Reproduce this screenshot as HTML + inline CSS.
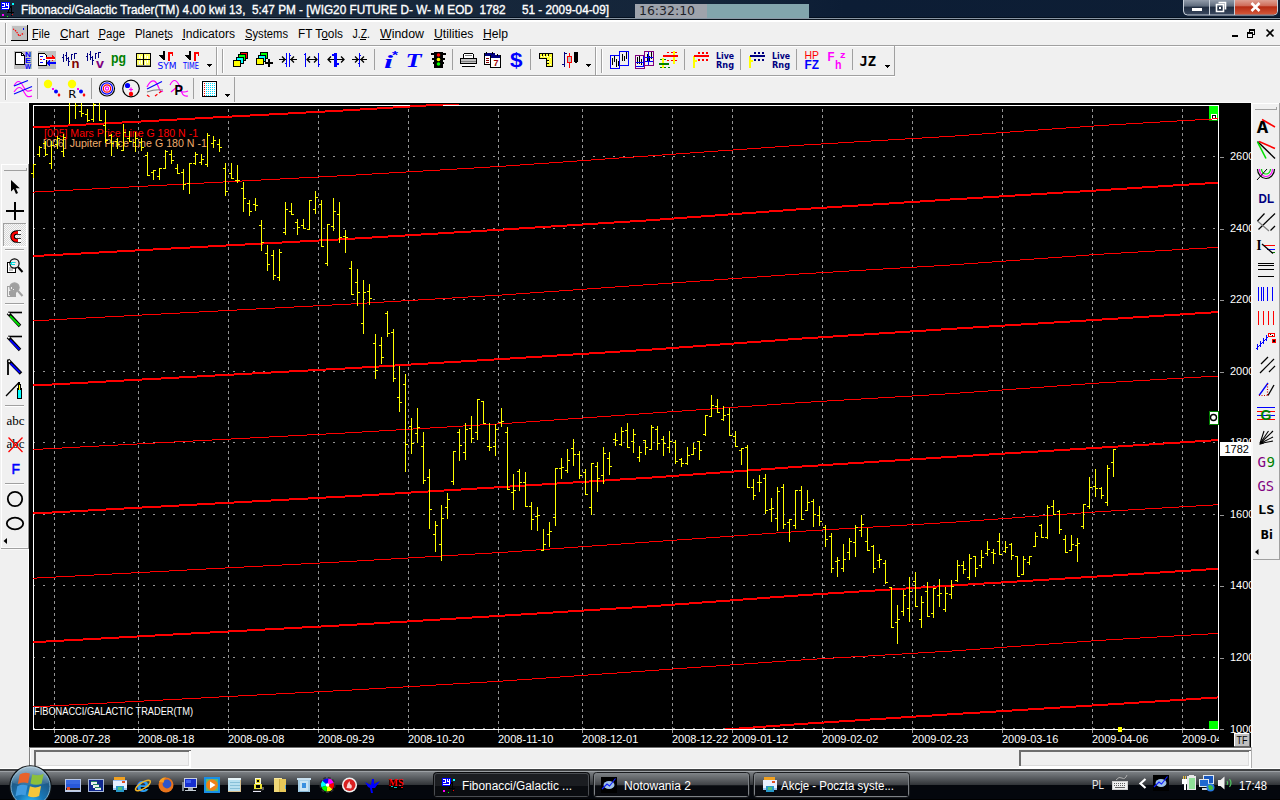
<!DOCTYPE html>
<html lang="pl">
<head>
<meta charset="utf-8">
<title>Fibonacci/Galactic Trader(TM) 4.00 - WIG20 FUTURE</title>
<style>
html,body{margin:0;padding:0;background:#f0f0f0;}
body{width:1280px;height:800px;overflow:hidden;position:relative;font-family:"Liberation Sans", sans-serif;}
svg{position:absolute;left:0;top:0;display:block;font-family:"Liberation Sans", sans-serif;}
text{white-space:pre;}
</style>
</head>
<body>
<svg width="1280" height="800" viewBox="0 0 1280 800">
<defs><linearGradient id="tb" x1="0" x2="1" y1="0" y2="0"><stop offset="0" stop-color="#1a2a3c"/><stop offset=".55" stop-color="#14253a"/><stop offset=".66" stop-color="#0c1d35"/><stop offset="1" stop-color="#0e1e34"/></linearGradient><linearGradient id="tk" x1="0" x2="0" y1="0" y2="1"><stop offset="0" stop-color="#7b7f83"/><stop offset="1" stop-color="#303337"/></linearGradient></defs>
<rect x="0" y="0" width="1280" height="17" fill="url(#tb)" />
<rect x="0" y="17" width="1280" height="1" fill="#04101f" />
<rect x="0" y="18" width="1280" height="1" fill="#8a97a5" />
<rect x="0" y="19" width="1280" height="1" fill="#0d1620" />
<rect x="0" y="20" width="1280" height="2" fill="#fff" />
<text x="21" y="13.8" font-size="12" fill="#fff" textLength="588" lengthAdjust="spacingAndGlyphs" stroke="#fff" stroke-width=".35">Fibonacci/Galactic Trader(TM) 4.00 kwi 13,  5:47 PM - [WIG20 FUTURE D- W- M EOD  1782     51 - 2009-04-09]</text>
<rect x="635" y="4" width="72" height="14" fill="#9ea3ac" />
<rect x="707" y="4" width="102" height="14" fill="#82a5ad" />
<text x="639" y="15" font-size="12" fill="#1e2228" textLength="56" lengthAdjust="spacingAndGlyphs" font-family='"DejaVu Sans", sans-serif' >16:32:10</text>
<text x="32" y="38" font-size="12" fill="#000" textLength="18" lengthAdjust="spacingAndGlyphs" >File</text>
<text x="60" y="38" font-size="12" fill="#000" textLength="29" lengthAdjust="spacingAndGlyphs" >Chart</text>
<text x="98.5" y="38" font-size="12" fill="#000" textLength="26.5" lengthAdjust="spacingAndGlyphs" >Page</text>
<text x="135" y="38" font-size="12" fill="#000" textLength="38" lengthAdjust="spacingAndGlyphs" >Planets</text>
<text x="182.5" y="38" font-size="12" fill="#000" textLength="52.5" lengthAdjust="spacingAndGlyphs" >Indicators</text>
<text x="245" y="38" font-size="12" fill="#000" textLength="43" lengthAdjust="spacingAndGlyphs" >Systems</text>
<text x="298" y="38" font-size="12" fill="#000" textLength="45" lengthAdjust="spacingAndGlyphs" >FT Tools</text>
<text x="352.5" y="38" font-size="12" fill="#000" textLength="17.5" lengthAdjust="spacingAndGlyphs" >J.Z.</text>
<text x="380" y="38" font-size="12" fill="#000" textLength="44" lengthAdjust="spacingAndGlyphs" >Window</text>
<text x="434" y="38" font-size="12" fill="#000" textLength="39.5" lengthAdjust="spacingAndGlyphs" >Utilities</text>
<text x="483" y="38" font-size="12" fill="#000" textLength="25" lengthAdjust="spacingAndGlyphs" >Help</text>
<g shape-rendering="crispEdges">
<rect x="0" y="45" width="1280" height="1" fill="#a0a0a0" />
<rect x="0" y="46" width="1280" height="1" fill="#fff" />
<rect x="0" y="75" width="895" height="1" fill="#a0a0a0" />
<rect x="0" y="76" width="895" height="1" fill="#fff" />
<rect x="894" y="46" width="1" height="30" fill="#a0a0a0" />
<rect x="234" y="77" width="1" height="26" fill="#a0a0a0" />
<rect x="0" y="102" width="1252" height="1" fill="#fafafa" />
<rect x="216" y="47" width="1" height="28" fill="#a0a0a0" />
<rect x="217" y="47" width="1" height="28" fill="#fff" />
<rect x="595" y="47" width="1" height="28" fill="#a0a0a0" />
<rect x="596" y="47" width="1" height="28" fill="#fff" />
<rect x="5" y="49" width="1" height="24" fill="#a0a0a0" />
<rect x="6" y="49" width="1" height="24" fill="#fff" />
<rect x="222" y="49" width="1" height="24" fill="#a0a0a0" />
<rect x="223" y="49" width="1" height="24" fill="#fff" />
<rect x="601" y="49" width="1" height="24" fill="#a0a0a0" />
<rect x="602" y="49" width="1" height="24" fill="#fff" />
<rect x="5" y="79" width="1" height="21" fill="#a0a0a0" />
<rect x="6" y="79" width="1" height="21" fill="#fff" />
<rect x="5" y="23" width="1" height="20" fill="#a0a0a0" />
<rect x="6" y="23" width="1" height="20" fill="#fff" />
<rect x="374" y="49" width="1" height="21" fill="#a0a0a0" />
<rect x="452" y="49" width="1" height="21" fill="#a0a0a0" />
<rect x="530" y="49" width="1" height="21" fill="#a0a0a0" />
<rect x="684" y="49" width="1" height="21" fill="#a0a0a0" />
<rect x="740" y="49" width="1" height="21" fill="#a0a0a0" />
<rect x="796" y="49" width="1" height="21" fill="#a0a0a0" />
<rect x="852" y="49" width="1" height="21" fill="#a0a0a0" />
<rect x="37" y="78" width="1" height="21" fill="#a0a0a0" />
<rect x="91" y="78" width="1" height="21" fill="#a0a0a0" />
<rect x="193" y="78" width="1" height="21" fill="#a0a0a0" />
<rect x="1" y="164" width="27" height="1" fill="#fff" />
<rect x="1" y="164" width="1" height="384" fill="#fff" />
<rect x="1" y="548" width="28" height="1" fill="#a0a0a0" />
<rect x="28" y="103" width="1" height="644" fill="#fff" />
<rect x="28" y="164" width="1" height="385" fill="#909090" />
<rect x="27" y="165" width="1" height="382" fill="#f8f8f8" />
<rect x="1" y="547" width="27" height="1" fill="#fafafa" />
<rect x="0" y="549" width="28" height="1" fill="#fafafa" />
<rect x="4" y="170" width="23" height="1" fill="#a0a0a0" />
<rect x="26" y="168" width="1" height="3" fill="#a0a0a0" />
<rect x="5" y="249" width="19" height="1" fill="#a0a0a0" />
<rect x="5" y="250" width="19" height="1" fill="#fff" />
<rect x="5" y="303" width="19" height="1" fill="#a0a0a0" />
<rect x="5" y="304" width="19" height="1" fill="#fff" />
<rect x="5" y="405" width="19" height="1" fill="#a0a0a0" />
<rect x="5" y="406" width="19" height="1" fill="#fff" />
<rect x="5" y="483" width="19" height="1" fill="#a0a0a0" />
<rect x="5" y="484" width="19" height="1" fill="#fff" />
<rect x="3" y="223" width="24" height="24" fill="#f8f8f8" />
<rect x="3" y="223" width="24" height="1" fill="#a0a0a0" />
<rect x="3" y="223" width="1" height="24" fill="#a0a0a0" />
<rect x="3" y="246" width="24" height="1" fill="#fff" />
<rect x="26" y="223" width="1" height="24" fill="#fff" />
<rect x="1251" y="103" width="2" height="644" fill="#fafafa" />
<rect x="1253" y="103" width="26" height="1" fill="#fff" />
<rect x="1279" y="103" width="1" height="457" fill="#a0a0a0" />
<rect x="1253" y="559" width="27" height="1" fill="#a0a0a0" />
<rect x="1255" y="109" width="22" height="1" fill="#a0a0a0" />
<rect x="1276" y="107" width="1" height="3" fill="#a0a0a0" />
<rect x="29" y="747" width="1222" height="1" fill="#707070" />
<rect x="29" y="748" width="1222" height="1" fill="#fff" />
<rect x="29" y="747" width="1" height="22" fill="#808080" />
<rect x="30" y="748" width="1" height="21" fill="#fff" />
<rect x="34" y="750" width="157" height="2" fill="#6e6e6e" />
<rect x="34" y="750" width="2" height="16" fill="#6e6e6e" />
<rect x="34" y="766" width="157" height="2" fill="#fff" />
<rect x="189" y="751" width="2" height="17" fill="#fff" />
<rect x="36" y="765" width="153" height="1" fill="#dcdcdc" />
<rect x="188" y="752" width="1" height="14" fill="#dcdcdc" />
<rect x="1019" y="750" width="232" height="2" fill="#6e6e6e" />
<rect x="1019" y="750" width="2" height="16" fill="#6e6e6e" />
<rect x="1019" y="766" width="232" height="2" fill="#fff" />
<rect x="1249" y="751" width="2" height="17" fill="#fff" />
<rect x="1021" y="765" width="228" height="1" fill="#dcdcdc" />
<rect x="1248" y="752" width="1" height="14" fill="#dcdcdc" />
<rect x="1251" y="747" width="1" height="22" fill="#b0b0b0" />
<rect x="0" y="768" width="1280" height="1" fill="#fff" />
<rect x="0" y="769" width="1280" height="2" fill="#404244" />
<rect x="0" y="771" width="1280" height="1" fill="#9ca0a4" />
<rect x="0" y="772" width="1280" height="13" fill="url(#tk)" />
<rect x="0" y="785" width="1280" height="15" fill="#04070d" />
<rect x="0" y="799" width="1280" height="1" fill="#000" />
</g>
<g shape-rendering="crispEdges" fill="#000">
<rect x="32" y="39" width="6" height="1"/>
<rect x="60" y="39" width="8" height="1"/>
<rect x="98" y="39" width="7" height="1"/>
<rect x="165" y="39" width="4" height="1"/>
<rect x="182" y="39" width="3" height="1"/>
<rect x="245" y="39" width="7" height="1"/>
<rect x="322" y="39" width="6" height="1"/>
<rect x="360" y="39" width="6" height="1"/>
<rect x="380" y="39" width="11" height="1"/>
<rect x="434" y="39" width="8" height="1"/>
<rect x="483" y="39" width="8" height="1"/>
</g>
<rect x="433.5" y="772.5" width="156" height="25" rx="3" fill="#1b1d21" stroke="#0a0b0d"/>
<rect x="434.5" y="773.5" width="154" height="23" rx="2.5" fill="none" stroke="#4a4d52"/>
<rect x="435" y="786" width="153" height="10" fill="#0a0c10"/>
<rect x="593.5" y="772.5" width="156" height="25" rx="3" fill="none" stroke="#1a1c1f"/>
<rect x="594.5" y="773.5" width="154" height="23" rx="2.5" fill="rgba(255,255,255,.08)" stroke="#7d8186"/>
<rect x="595" y="786" width="153" height="10" fill="#080a0f"/>
<rect x="753.5" y="772.5" width="156" height="25" rx="3" fill="none" stroke="#1a1c1f"/>
<rect x="754.5" y="773.5" width="154" height="23" rx="2.5" fill="rgba(255,255,255,.08)" stroke="#7d8186"/>
<rect x="755" y="786" width="153" height="10" fill="#080a0f"/>
<text x="462" y="790" font-size="12" fill="#fff" textLength="110" lengthAdjust="spacingAndGlyphs" >Fibonacci/Galactic ...</text>
<text x="624" y="790" font-size="12" fill="#fff" textLength="67" lengthAdjust="spacingAndGlyphs" >Notowania 2</text>
<text x="781" y="790" font-size="12" fill="#fff" textLength="113" lengthAdjust="spacingAndGlyphs" >Akcje - Poczta syste...</text>
<text x="1092" y="789" font-size="12" fill="#e8e8e8" textLength="12" lengthAdjust="spacingAndGlyphs" >PL</text>
<text x="1239" y="790" font-size="12" fill="#fff" textLength="28" lengthAdjust="spacingAndGlyphs" >17:48</text>
<g shape-rendering="crispEdges">
<rect x="29" y="103" width="1222" height="644" fill="#000" />
<path d="M54 109h1v3h-1zM54 115h1v3h-1zM54 121h1v3h-1zM54 127h1v3h-1zM54 133h1v3h-1zM54 139h1v3h-1zM54 145h1v3h-1zM54 151h1v3h-1zM54 157h1v3h-1zM54 163h1v3h-1zM54 169h1v3h-1zM54 175h1v3h-1zM54 181h1v3h-1zM54 187h1v3h-1zM54 193h1v3h-1zM54 199h1v3h-1zM54 205h1v3h-1zM54 211h1v3h-1zM54 217h1v3h-1zM54 223h1v3h-1zM54 229h1v3h-1zM54 235h1v3h-1zM54 241h1v3h-1zM54 247h1v3h-1zM54 253h1v3h-1zM54 259h1v3h-1zM54 265h1v3h-1zM54 271h1v3h-1zM54 277h1v3h-1zM54 283h1v3h-1zM54 289h1v3h-1zM54 295h1v3h-1zM54 301h1v3h-1zM54 307h1v3h-1zM54 313h1v3h-1zM54 319h1v3h-1zM54 325h1v3h-1zM54 331h1v3h-1zM54 337h1v3h-1zM54 343h1v3h-1zM54 349h1v3h-1zM54 355h1v3h-1zM54 361h1v3h-1zM54 367h1v3h-1zM54 373h1v3h-1zM54 379h1v3h-1zM54 385h1v3h-1zM54 391h1v3h-1zM54 397h1v3h-1zM54 403h1v3h-1zM54 409h1v3h-1zM54 415h1v3h-1zM54 421h1v3h-1zM54 427h1v3h-1zM54 433h1v3h-1zM54 439h1v3h-1zM54 445h1v3h-1zM54 451h1v3h-1zM54 457h1v3h-1zM54 463h1v3h-1zM54 469h1v3h-1zM54 475h1v3h-1zM54 481h1v3h-1zM54 487h1v3h-1zM54 493h1v3h-1zM54 499h1v3h-1zM54 505h1v3h-1zM54 511h1v3h-1zM54 517h1v3h-1zM54 523h1v3h-1zM54 529h1v3h-1zM54 535h1v3h-1zM54 541h1v3h-1zM54 547h1v3h-1zM54 553h1v3h-1zM54 559h1v3h-1zM54 565h1v3h-1zM54 571h1v3h-1zM54 577h1v3h-1zM54 583h1v3h-1zM54 589h1v3h-1zM54 595h1v3h-1zM54 601h1v3h-1zM54 607h1v3h-1zM54 613h1v3h-1zM54 619h1v3h-1zM54 625h1v3h-1zM54 631h1v3h-1zM54 637h1v3h-1zM54 643h1v3h-1zM54 649h1v3h-1zM54 655h1v3h-1zM54 661h1v3h-1zM54 667h1v3h-1zM54 673h1v3h-1zM54 679h1v3h-1zM54 685h1v3h-1zM54 691h1v3h-1zM54 697h1v3h-1zM54 703h1v3h-1zM54 709h1v3h-1zM54 715h1v3h-1zM54 721h1v3h-1zM54 727h1v2h-1zM54 729h1v4h-1zM138 109h1v3h-1zM138 115h1v3h-1zM138 121h1v3h-1zM138 127h1v3h-1zM138 133h1v3h-1zM138 139h1v3h-1zM138 145h1v3h-1zM138 151h1v3h-1zM138 157h1v3h-1zM138 163h1v3h-1zM138 169h1v3h-1zM138 175h1v3h-1zM138 181h1v3h-1zM138 187h1v3h-1zM138 193h1v3h-1zM138 199h1v3h-1zM138 205h1v3h-1zM138 211h1v3h-1zM138 217h1v3h-1zM138 223h1v3h-1zM138 229h1v3h-1zM138 235h1v3h-1zM138 241h1v3h-1zM138 247h1v3h-1zM138 253h1v3h-1zM138 259h1v3h-1zM138 265h1v3h-1zM138 271h1v3h-1zM138 277h1v3h-1zM138 283h1v3h-1zM138 289h1v3h-1zM138 295h1v3h-1zM138 301h1v3h-1zM138 307h1v3h-1zM138 313h1v3h-1zM138 319h1v3h-1zM138 325h1v3h-1zM138 331h1v3h-1zM138 337h1v3h-1zM138 343h1v3h-1zM138 349h1v3h-1zM138 355h1v3h-1zM138 361h1v3h-1zM138 367h1v3h-1zM138 373h1v3h-1zM138 379h1v3h-1zM138 385h1v3h-1zM138 391h1v3h-1zM138 397h1v3h-1zM138 403h1v3h-1zM138 409h1v3h-1zM138 415h1v3h-1zM138 421h1v3h-1zM138 427h1v3h-1zM138 433h1v3h-1zM138 439h1v3h-1zM138 445h1v3h-1zM138 451h1v3h-1zM138 457h1v3h-1zM138 463h1v3h-1zM138 469h1v3h-1zM138 475h1v3h-1zM138 481h1v3h-1zM138 487h1v3h-1zM138 493h1v3h-1zM138 499h1v3h-1zM138 505h1v3h-1zM138 511h1v3h-1zM138 517h1v3h-1zM138 523h1v3h-1zM138 529h1v3h-1zM138 535h1v3h-1zM138 541h1v3h-1zM138 547h1v3h-1zM138 553h1v3h-1zM138 559h1v3h-1zM138 565h1v3h-1zM138 571h1v3h-1zM138 577h1v3h-1zM138 583h1v3h-1zM138 589h1v3h-1zM138 595h1v3h-1zM138 601h1v3h-1zM138 607h1v3h-1zM138 613h1v3h-1zM138 619h1v3h-1zM138 625h1v3h-1zM138 631h1v3h-1zM138 637h1v3h-1zM138 643h1v3h-1zM138 649h1v3h-1zM138 655h1v3h-1zM138 661h1v3h-1zM138 667h1v3h-1zM138 673h1v3h-1zM138 679h1v3h-1zM138 685h1v3h-1zM138 691h1v3h-1zM138 697h1v3h-1zM138 703h1v3h-1zM138 709h1v3h-1zM138 715h1v3h-1zM138 721h1v3h-1zM138 727h1v2h-1zM138 729h1v4h-1zM228 109h1v3h-1zM228 115h1v3h-1zM228 121h1v3h-1zM228 127h1v3h-1zM228 133h1v3h-1zM228 139h1v3h-1zM228 145h1v3h-1zM228 151h1v3h-1zM228 157h1v3h-1zM228 163h1v3h-1zM228 169h1v3h-1zM228 175h1v3h-1zM228 181h1v3h-1zM228 187h1v3h-1zM228 193h1v3h-1zM228 199h1v3h-1zM228 205h1v3h-1zM228 211h1v3h-1zM228 217h1v3h-1zM228 223h1v3h-1zM228 229h1v3h-1zM228 235h1v3h-1zM228 241h1v3h-1zM228 247h1v3h-1zM228 253h1v3h-1zM228 259h1v3h-1zM228 265h1v3h-1zM228 271h1v3h-1zM228 277h1v3h-1zM228 283h1v3h-1zM228 289h1v3h-1zM228 295h1v3h-1zM228 301h1v3h-1zM228 307h1v3h-1zM228 313h1v3h-1zM228 319h1v3h-1zM228 325h1v3h-1zM228 331h1v3h-1zM228 337h1v3h-1zM228 343h1v3h-1zM228 349h1v3h-1zM228 355h1v3h-1zM228 361h1v3h-1zM228 367h1v3h-1zM228 373h1v3h-1zM228 379h1v3h-1zM228 385h1v3h-1zM228 391h1v3h-1zM228 397h1v3h-1zM228 403h1v3h-1zM228 409h1v3h-1zM228 415h1v3h-1zM228 421h1v3h-1zM228 427h1v3h-1zM228 433h1v3h-1zM228 439h1v3h-1zM228 445h1v3h-1zM228 451h1v3h-1zM228 457h1v3h-1zM228 463h1v3h-1zM228 469h1v3h-1zM228 475h1v3h-1zM228 481h1v3h-1zM228 487h1v3h-1zM228 493h1v3h-1zM228 499h1v3h-1zM228 505h1v3h-1zM228 511h1v3h-1zM228 517h1v3h-1zM228 523h1v3h-1zM228 529h1v3h-1zM228 535h1v3h-1zM228 541h1v3h-1zM228 547h1v3h-1zM228 553h1v3h-1zM228 559h1v3h-1zM228 565h1v3h-1zM228 571h1v3h-1zM228 577h1v3h-1zM228 583h1v3h-1zM228 589h1v3h-1zM228 595h1v3h-1zM228 601h1v3h-1zM228 607h1v3h-1zM228 613h1v3h-1zM228 619h1v3h-1zM228 625h1v3h-1zM228 631h1v3h-1zM228 637h1v3h-1zM228 643h1v3h-1zM228 649h1v3h-1zM228 655h1v3h-1zM228 661h1v3h-1zM228 667h1v3h-1zM228 673h1v3h-1zM228 679h1v3h-1zM228 685h1v3h-1zM228 691h1v3h-1zM228 697h1v3h-1zM228 703h1v3h-1zM228 709h1v3h-1zM228 715h1v3h-1zM228 721h1v3h-1zM228 727h1v2h-1zM228 729h1v4h-1zM318 109h1v3h-1zM318 115h1v3h-1zM318 121h1v3h-1zM318 127h1v3h-1zM318 133h1v3h-1zM318 139h1v3h-1zM318 145h1v3h-1zM318 151h1v3h-1zM318 157h1v3h-1zM318 163h1v3h-1zM318 169h1v3h-1zM318 175h1v3h-1zM318 181h1v3h-1zM318 187h1v3h-1zM318 193h1v3h-1zM318 199h1v3h-1zM318 205h1v3h-1zM318 211h1v3h-1zM318 217h1v3h-1zM318 223h1v3h-1zM318 229h1v3h-1zM318 235h1v3h-1zM318 241h1v3h-1zM318 247h1v3h-1zM318 253h1v3h-1zM318 259h1v3h-1zM318 265h1v3h-1zM318 271h1v3h-1zM318 277h1v3h-1zM318 283h1v3h-1zM318 289h1v3h-1zM318 295h1v3h-1zM318 301h1v3h-1zM318 307h1v3h-1zM318 313h1v3h-1zM318 319h1v3h-1zM318 325h1v3h-1zM318 331h1v3h-1zM318 337h1v3h-1zM318 343h1v3h-1zM318 349h1v3h-1zM318 355h1v3h-1zM318 361h1v3h-1zM318 367h1v3h-1zM318 373h1v3h-1zM318 379h1v3h-1zM318 385h1v3h-1zM318 391h1v3h-1zM318 397h1v3h-1zM318 403h1v3h-1zM318 409h1v3h-1zM318 415h1v3h-1zM318 421h1v3h-1zM318 427h1v3h-1zM318 433h1v3h-1zM318 439h1v3h-1zM318 445h1v3h-1zM318 451h1v3h-1zM318 457h1v3h-1zM318 463h1v3h-1zM318 469h1v3h-1zM318 475h1v3h-1zM318 481h1v3h-1zM318 487h1v3h-1zM318 493h1v3h-1zM318 499h1v3h-1zM318 505h1v3h-1zM318 511h1v3h-1zM318 517h1v3h-1zM318 523h1v3h-1zM318 529h1v3h-1zM318 535h1v3h-1zM318 541h1v3h-1zM318 547h1v3h-1zM318 553h1v3h-1zM318 559h1v3h-1zM318 565h1v3h-1zM318 571h1v3h-1zM318 577h1v3h-1zM318 583h1v3h-1zM318 589h1v3h-1zM318 595h1v3h-1zM318 601h1v3h-1zM318 607h1v3h-1zM318 613h1v3h-1zM318 619h1v3h-1zM318 625h1v3h-1zM318 631h1v3h-1zM318 637h1v3h-1zM318 643h1v3h-1zM318 649h1v3h-1zM318 655h1v3h-1zM318 661h1v3h-1zM318 667h1v3h-1zM318 673h1v3h-1zM318 679h1v3h-1zM318 685h1v3h-1zM318 691h1v3h-1zM318 697h1v3h-1zM318 703h1v3h-1zM318 709h1v3h-1zM318 715h1v3h-1zM318 721h1v3h-1zM318 727h1v2h-1zM318 729h1v4h-1zM408 109h1v3h-1zM408 115h1v3h-1zM408 121h1v3h-1zM408 127h1v3h-1zM408 133h1v3h-1zM408 139h1v3h-1zM408 145h1v3h-1zM408 151h1v3h-1zM408 157h1v3h-1zM408 163h1v3h-1zM408 169h1v3h-1zM408 175h1v3h-1zM408 181h1v3h-1zM408 187h1v3h-1zM408 193h1v3h-1zM408 199h1v3h-1zM408 205h1v3h-1zM408 211h1v3h-1zM408 217h1v3h-1zM408 223h1v3h-1zM408 229h1v3h-1zM408 235h1v3h-1zM408 241h1v3h-1zM408 247h1v3h-1zM408 253h1v3h-1zM408 259h1v3h-1zM408 265h1v3h-1zM408 271h1v3h-1zM408 277h1v3h-1zM408 283h1v3h-1zM408 289h1v3h-1zM408 295h1v3h-1zM408 301h1v3h-1zM408 307h1v3h-1zM408 313h1v3h-1zM408 319h1v3h-1zM408 325h1v3h-1zM408 331h1v3h-1zM408 337h1v3h-1zM408 343h1v3h-1zM408 349h1v3h-1zM408 355h1v3h-1zM408 361h1v3h-1zM408 367h1v3h-1zM408 373h1v3h-1zM408 379h1v3h-1zM408 385h1v3h-1zM408 391h1v3h-1zM408 397h1v3h-1zM408 403h1v3h-1zM408 409h1v3h-1zM408 415h1v3h-1zM408 421h1v3h-1zM408 427h1v3h-1zM408 433h1v3h-1zM408 439h1v3h-1zM408 445h1v3h-1zM408 451h1v3h-1zM408 457h1v3h-1zM408 463h1v3h-1zM408 469h1v3h-1zM408 475h1v3h-1zM408 481h1v3h-1zM408 487h1v3h-1zM408 493h1v3h-1zM408 499h1v3h-1zM408 505h1v3h-1zM408 511h1v3h-1zM408 517h1v3h-1zM408 523h1v3h-1zM408 529h1v3h-1zM408 535h1v3h-1zM408 541h1v3h-1zM408 547h1v3h-1zM408 553h1v3h-1zM408 559h1v3h-1zM408 565h1v3h-1zM408 571h1v3h-1zM408 577h1v3h-1zM408 583h1v3h-1zM408 589h1v3h-1zM408 595h1v3h-1zM408 601h1v3h-1zM408 607h1v3h-1zM408 613h1v3h-1zM408 619h1v3h-1zM408 625h1v3h-1zM408 631h1v3h-1zM408 637h1v3h-1zM408 643h1v3h-1zM408 649h1v3h-1zM408 655h1v3h-1zM408 661h1v3h-1zM408 667h1v3h-1zM408 673h1v3h-1zM408 679h1v3h-1zM408 685h1v3h-1zM408 691h1v3h-1zM408 697h1v3h-1zM408 703h1v3h-1zM408 709h1v3h-1zM408 715h1v3h-1zM408 721h1v3h-1zM408 727h1v2h-1zM408 729h1v4h-1zM498 109h1v3h-1zM498 115h1v3h-1zM498 121h1v3h-1zM498 127h1v3h-1zM498 133h1v3h-1zM498 139h1v3h-1zM498 145h1v3h-1zM498 151h1v3h-1zM498 157h1v3h-1zM498 163h1v3h-1zM498 169h1v3h-1zM498 175h1v3h-1zM498 181h1v3h-1zM498 187h1v3h-1zM498 193h1v3h-1zM498 199h1v3h-1zM498 205h1v3h-1zM498 211h1v3h-1zM498 217h1v3h-1zM498 223h1v3h-1zM498 229h1v3h-1zM498 235h1v3h-1zM498 241h1v3h-1zM498 247h1v3h-1zM498 253h1v3h-1zM498 259h1v3h-1zM498 265h1v3h-1zM498 271h1v3h-1zM498 277h1v3h-1zM498 283h1v3h-1zM498 289h1v3h-1zM498 295h1v3h-1zM498 301h1v3h-1zM498 307h1v3h-1zM498 313h1v3h-1zM498 319h1v3h-1zM498 325h1v3h-1zM498 331h1v3h-1zM498 337h1v3h-1zM498 343h1v3h-1zM498 349h1v3h-1zM498 355h1v3h-1zM498 361h1v3h-1zM498 367h1v3h-1zM498 373h1v3h-1zM498 379h1v3h-1zM498 385h1v3h-1zM498 391h1v3h-1zM498 397h1v3h-1zM498 403h1v3h-1zM498 409h1v3h-1zM498 415h1v3h-1zM498 421h1v3h-1zM498 427h1v3h-1zM498 433h1v3h-1zM498 439h1v3h-1zM498 445h1v3h-1zM498 451h1v3h-1zM498 457h1v3h-1zM498 463h1v3h-1zM498 469h1v3h-1zM498 475h1v3h-1zM498 481h1v3h-1zM498 487h1v3h-1zM498 493h1v3h-1zM498 499h1v3h-1zM498 505h1v3h-1zM498 511h1v3h-1zM498 517h1v3h-1zM498 523h1v3h-1zM498 529h1v3h-1zM498 535h1v3h-1zM498 541h1v3h-1zM498 547h1v3h-1zM498 553h1v3h-1zM498 559h1v3h-1zM498 565h1v3h-1zM498 571h1v3h-1zM498 577h1v3h-1zM498 583h1v3h-1zM498 589h1v3h-1zM498 595h1v3h-1zM498 601h1v3h-1zM498 607h1v3h-1zM498 613h1v3h-1zM498 619h1v3h-1zM498 625h1v3h-1zM498 631h1v3h-1zM498 637h1v3h-1zM498 643h1v3h-1zM498 649h1v3h-1zM498 655h1v3h-1zM498 661h1v3h-1zM498 667h1v3h-1zM498 673h1v3h-1zM498 679h1v3h-1zM498 685h1v3h-1zM498 691h1v3h-1zM498 697h1v3h-1zM498 703h1v3h-1zM498 709h1v3h-1zM498 715h1v3h-1zM498 721h1v3h-1zM498 727h1v2h-1zM498 729h1v4h-1zM582 109h1v3h-1zM582 115h1v3h-1zM582 121h1v3h-1zM582 127h1v3h-1zM582 133h1v3h-1zM582 139h1v3h-1zM582 145h1v3h-1zM582 151h1v3h-1zM582 157h1v3h-1zM582 163h1v3h-1zM582 169h1v3h-1zM582 175h1v3h-1zM582 181h1v3h-1zM582 187h1v3h-1zM582 193h1v3h-1zM582 199h1v3h-1zM582 205h1v3h-1zM582 211h1v3h-1zM582 217h1v3h-1zM582 223h1v3h-1zM582 229h1v3h-1zM582 235h1v3h-1zM582 241h1v3h-1zM582 247h1v3h-1zM582 253h1v3h-1zM582 259h1v3h-1zM582 265h1v3h-1zM582 271h1v3h-1zM582 277h1v3h-1zM582 283h1v3h-1zM582 289h1v3h-1zM582 295h1v3h-1zM582 301h1v3h-1zM582 307h1v3h-1zM582 313h1v3h-1zM582 319h1v3h-1zM582 325h1v3h-1zM582 331h1v3h-1zM582 337h1v3h-1zM582 343h1v3h-1zM582 349h1v3h-1zM582 355h1v3h-1zM582 361h1v3h-1zM582 367h1v3h-1zM582 373h1v3h-1zM582 379h1v3h-1zM582 385h1v3h-1zM582 391h1v3h-1zM582 397h1v3h-1zM582 403h1v3h-1zM582 409h1v3h-1zM582 415h1v3h-1zM582 421h1v3h-1zM582 427h1v3h-1zM582 433h1v3h-1zM582 439h1v3h-1zM582 445h1v3h-1zM582 451h1v3h-1zM582 457h1v3h-1zM582 463h1v3h-1zM582 469h1v3h-1zM582 475h1v3h-1zM582 481h1v3h-1zM582 487h1v3h-1zM582 493h1v3h-1zM582 499h1v3h-1zM582 505h1v3h-1zM582 511h1v3h-1zM582 517h1v3h-1zM582 523h1v3h-1zM582 529h1v3h-1zM582 535h1v3h-1zM582 541h1v3h-1zM582 547h1v3h-1zM582 553h1v3h-1zM582 559h1v3h-1zM582 565h1v3h-1zM582 571h1v3h-1zM582 577h1v3h-1zM582 583h1v3h-1zM582 589h1v3h-1zM582 595h1v3h-1zM582 601h1v3h-1zM582 607h1v3h-1zM582 613h1v3h-1zM582 619h1v3h-1zM582 625h1v3h-1zM582 631h1v3h-1zM582 637h1v3h-1zM582 643h1v3h-1zM582 649h1v3h-1zM582 655h1v3h-1zM582 661h1v3h-1zM582 667h1v3h-1zM582 673h1v3h-1zM582 679h1v3h-1zM582 685h1v3h-1zM582 691h1v3h-1zM582 697h1v3h-1zM582 703h1v3h-1zM582 709h1v3h-1zM582 715h1v3h-1zM582 721h1v3h-1zM582 727h1v2h-1zM582 729h1v4h-1zM672 109h1v3h-1zM672 115h1v3h-1zM672 121h1v3h-1zM672 127h1v3h-1zM672 133h1v3h-1zM672 139h1v3h-1zM672 145h1v3h-1zM672 151h1v3h-1zM672 157h1v3h-1zM672 163h1v3h-1zM672 169h1v3h-1zM672 175h1v3h-1zM672 181h1v3h-1zM672 187h1v3h-1zM672 193h1v3h-1zM672 199h1v3h-1zM672 205h1v3h-1zM672 211h1v3h-1zM672 217h1v3h-1zM672 223h1v3h-1zM672 229h1v3h-1zM672 235h1v3h-1zM672 241h1v3h-1zM672 247h1v3h-1zM672 253h1v3h-1zM672 259h1v3h-1zM672 265h1v3h-1zM672 271h1v3h-1zM672 277h1v3h-1zM672 283h1v3h-1zM672 289h1v3h-1zM672 295h1v3h-1zM672 301h1v3h-1zM672 307h1v3h-1zM672 313h1v3h-1zM672 319h1v3h-1zM672 325h1v3h-1zM672 331h1v3h-1zM672 337h1v3h-1zM672 343h1v3h-1zM672 349h1v3h-1zM672 355h1v3h-1zM672 361h1v3h-1zM672 367h1v3h-1zM672 373h1v3h-1zM672 379h1v3h-1zM672 385h1v3h-1zM672 391h1v3h-1zM672 397h1v3h-1zM672 403h1v3h-1zM672 409h1v3h-1zM672 415h1v3h-1zM672 421h1v3h-1zM672 427h1v3h-1zM672 433h1v3h-1zM672 439h1v3h-1zM672 445h1v3h-1zM672 451h1v3h-1zM672 457h1v3h-1zM672 463h1v3h-1zM672 469h1v3h-1zM672 475h1v3h-1zM672 481h1v3h-1zM672 487h1v3h-1zM672 493h1v3h-1zM672 499h1v3h-1zM672 505h1v3h-1zM672 511h1v3h-1zM672 517h1v3h-1zM672 523h1v3h-1zM672 529h1v3h-1zM672 535h1v3h-1zM672 541h1v3h-1zM672 547h1v3h-1zM672 553h1v3h-1zM672 559h1v3h-1zM672 565h1v3h-1zM672 571h1v3h-1zM672 577h1v3h-1zM672 583h1v3h-1zM672 589h1v3h-1zM672 595h1v3h-1zM672 601h1v3h-1zM672 607h1v3h-1zM672 613h1v3h-1zM672 619h1v3h-1zM672 625h1v3h-1zM672 631h1v3h-1zM672 637h1v3h-1zM672 643h1v3h-1zM672 649h1v3h-1zM672 655h1v3h-1zM672 661h1v3h-1zM672 667h1v3h-1zM672 673h1v3h-1zM672 679h1v3h-1zM672 685h1v3h-1zM672 691h1v3h-1zM672 697h1v3h-1zM672 703h1v3h-1zM672 709h1v3h-1zM672 715h1v3h-1zM672 721h1v3h-1zM672 727h1v2h-1zM672 729h1v4h-1zM732 109h1v3h-1zM732 115h1v3h-1zM732 121h1v3h-1zM732 127h1v3h-1zM732 133h1v3h-1zM732 139h1v3h-1zM732 145h1v3h-1zM732 151h1v3h-1zM732 157h1v3h-1zM732 163h1v3h-1zM732 169h1v3h-1zM732 175h1v3h-1zM732 181h1v3h-1zM732 187h1v3h-1zM732 193h1v3h-1zM732 199h1v3h-1zM732 205h1v3h-1zM732 211h1v3h-1zM732 217h1v3h-1zM732 223h1v3h-1zM732 229h1v3h-1zM732 235h1v3h-1zM732 241h1v3h-1zM732 247h1v3h-1zM732 253h1v3h-1zM732 259h1v3h-1zM732 265h1v3h-1zM732 271h1v3h-1zM732 277h1v3h-1zM732 283h1v3h-1zM732 289h1v3h-1zM732 295h1v3h-1zM732 301h1v3h-1zM732 307h1v3h-1zM732 313h1v3h-1zM732 319h1v3h-1zM732 325h1v3h-1zM732 331h1v3h-1zM732 337h1v3h-1zM732 343h1v3h-1zM732 349h1v3h-1zM732 355h1v3h-1zM732 361h1v3h-1zM732 367h1v3h-1zM732 373h1v3h-1zM732 379h1v3h-1zM732 385h1v3h-1zM732 391h1v3h-1zM732 397h1v3h-1zM732 403h1v3h-1zM732 409h1v3h-1zM732 415h1v3h-1zM732 421h1v3h-1zM732 427h1v3h-1zM732 433h1v3h-1zM732 439h1v3h-1zM732 445h1v3h-1zM732 451h1v3h-1zM732 457h1v3h-1zM732 463h1v3h-1zM732 469h1v3h-1zM732 475h1v3h-1zM732 481h1v3h-1zM732 487h1v3h-1zM732 493h1v3h-1zM732 499h1v3h-1zM732 505h1v3h-1zM732 511h1v3h-1zM732 517h1v3h-1zM732 523h1v3h-1zM732 529h1v3h-1zM732 535h1v3h-1zM732 541h1v3h-1zM732 547h1v3h-1zM732 553h1v3h-1zM732 559h1v3h-1zM732 565h1v3h-1zM732 571h1v3h-1zM732 577h1v3h-1zM732 583h1v3h-1zM732 589h1v3h-1zM732 595h1v3h-1zM732 601h1v3h-1zM732 607h1v3h-1zM732 613h1v3h-1zM732 619h1v3h-1zM732 625h1v3h-1zM732 631h1v3h-1zM732 637h1v3h-1zM732 643h1v3h-1zM732 649h1v3h-1zM732 655h1v3h-1zM732 661h1v3h-1zM732 667h1v3h-1zM732 673h1v3h-1zM732 679h1v3h-1zM732 685h1v3h-1zM732 691h1v3h-1zM732 697h1v3h-1zM732 703h1v3h-1zM732 709h1v3h-1zM732 715h1v3h-1zM732 721h1v3h-1zM732 727h1v2h-1zM732 729h1v4h-1zM822 109h1v3h-1zM822 115h1v3h-1zM822 121h1v3h-1zM822 127h1v3h-1zM822 133h1v3h-1zM822 139h1v3h-1zM822 145h1v3h-1zM822 151h1v3h-1zM822 157h1v3h-1zM822 163h1v3h-1zM822 169h1v3h-1zM822 175h1v3h-1zM822 181h1v3h-1zM822 187h1v3h-1zM822 193h1v3h-1zM822 199h1v3h-1zM822 205h1v3h-1zM822 211h1v3h-1zM822 217h1v3h-1zM822 223h1v3h-1zM822 229h1v3h-1zM822 235h1v3h-1zM822 241h1v3h-1zM822 247h1v3h-1zM822 253h1v3h-1zM822 259h1v3h-1zM822 265h1v3h-1zM822 271h1v3h-1zM822 277h1v3h-1zM822 283h1v3h-1zM822 289h1v3h-1zM822 295h1v3h-1zM822 301h1v3h-1zM822 307h1v3h-1zM822 313h1v3h-1zM822 319h1v3h-1zM822 325h1v3h-1zM822 331h1v3h-1zM822 337h1v3h-1zM822 343h1v3h-1zM822 349h1v3h-1zM822 355h1v3h-1zM822 361h1v3h-1zM822 367h1v3h-1zM822 373h1v3h-1zM822 379h1v3h-1zM822 385h1v3h-1zM822 391h1v3h-1zM822 397h1v3h-1zM822 403h1v3h-1zM822 409h1v3h-1zM822 415h1v3h-1zM822 421h1v3h-1zM822 427h1v3h-1zM822 433h1v3h-1zM822 439h1v3h-1zM822 445h1v3h-1zM822 451h1v3h-1zM822 457h1v3h-1zM822 463h1v3h-1zM822 469h1v3h-1zM822 475h1v3h-1zM822 481h1v3h-1zM822 487h1v3h-1zM822 493h1v3h-1zM822 499h1v3h-1zM822 505h1v3h-1zM822 511h1v3h-1zM822 517h1v3h-1zM822 523h1v3h-1zM822 529h1v3h-1zM822 535h1v3h-1zM822 541h1v3h-1zM822 547h1v3h-1zM822 553h1v3h-1zM822 559h1v3h-1zM822 565h1v3h-1zM822 571h1v3h-1zM822 577h1v3h-1zM822 583h1v3h-1zM822 589h1v3h-1zM822 595h1v3h-1zM822 601h1v3h-1zM822 607h1v3h-1zM822 613h1v3h-1zM822 619h1v3h-1zM822 625h1v3h-1zM822 631h1v3h-1zM822 637h1v3h-1zM822 643h1v3h-1zM822 649h1v3h-1zM822 655h1v3h-1zM822 661h1v3h-1zM822 667h1v3h-1zM822 673h1v3h-1zM822 679h1v3h-1zM822 685h1v3h-1zM822 691h1v3h-1zM822 697h1v3h-1zM822 703h1v3h-1zM822 709h1v3h-1zM822 715h1v3h-1zM822 721h1v3h-1zM822 727h1v2h-1zM822 729h1v4h-1zM912 109h1v3h-1zM912 115h1v3h-1zM912 121h1v3h-1zM912 127h1v3h-1zM912 133h1v3h-1zM912 139h1v3h-1zM912 145h1v3h-1zM912 151h1v3h-1zM912 157h1v3h-1zM912 163h1v3h-1zM912 169h1v3h-1zM912 175h1v3h-1zM912 181h1v3h-1zM912 187h1v3h-1zM912 193h1v3h-1zM912 199h1v3h-1zM912 205h1v3h-1zM912 211h1v3h-1zM912 217h1v3h-1zM912 223h1v3h-1zM912 229h1v3h-1zM912 235h1v3h-1zM912 241h1v3h-1zM912 247h1v3h-1zM912 253h1v3h-1zM912 259h1v3h-1zM912 265h1v3h-1zM912 271h1v3h-1zM912 277h1v3h-1zM912 283h1v3h-1zM912 289h1v3h-1zM912 295h1v3h-1zM912 301h1v3h-1zM912 307h1v3h-1zM912 313h1v3h-1zM912 319h1v3h-1zM912 325h1v3h-1zM912 331h1v3h-1zM912 337h1v3h-1zM912 343h1v3h-1zM912 349h1v3h-1zM912 355h1v3h-1zM912 361h1v3h-1zM912 367h1v3h-1zM912 373h1v3h-1zM912 379h1v3h-1zM912 385h1v3h-1zM912 391h1v3h-1zM912 397h1v3h-1zM912 403h1v3h-1zM912 409h1v3h-1zM912 415h1v3h-1zM912 421h1v3h-1zM912 427h1v3h-1zM912 433h1v3h-1zM912 439h1v3h-1zM912 445h1v3h-1zM912 451h1v3h-1zM912 457h1v3h-1zM912 463h1v3h-1zM912 469h1v3h-1zM912 475h1v3h-1zM912 481h1v3h-1zM912 487h1v3h-1zM912 493h1v3h-1zM912 499h1v3h-1zM912 505h1v3h-1zM912 511h1v3h-1zM912 517h1v3h-1zM912 523h1v3h-1zM912 529h1v3h-1zM912 535h1v3h-1zM912 541h1v3h-1zM912 547h1v3h-1zM912 553h1v3h-1zM912 559h1v3h-1zM912 565h1v3h-1zM912 571h1v3h-1zM912 577h1v3h-1zM912 583h1v3h-1zM912 589h1v3h-1zM912 595h1v3h-1zM912 601h1v3h-1zM912 607h1v3h-1zM912 613h1v3h-1zM912 619h1v3h-1zM912 625h1v3h-1zM912 631h1v3h-1zM912 637h1v3h-1zM912 643h1v3h-1zM912 649h1v3h-1zM912 655h1v3h-1zM912 661h1v3h-1zM912 667h1v3h-1zM912 673h1v3h-1zM912 679h1v3h-1zM912 685h1v3h-1zM912 691h1v3h-1zM912 697h1v3h-1zM912 703h1v3h-1zM912 709h1v3h-1zM912 715h1v3h-1zM912 721h1v3h-1zM912 727h1v2h-1zM912 729h1v4h-1zM1002 109h1v3h-1zM1002 115h1v3h-1zM1002 121h1v3h-1zM1002 127h1v3h-1zM1002 133h1v3h-1zM1002 139h1v3h-1zM1002 145h1v3h-1zM1002 151h1v3h-1zM1002 157h1v3h-1zM1002 163h1v3h-1zM1002 169h1v3h-1zM1002 175h1v3h-1zM1002 181h1v3h-1zM1002 187h1v3h-1zM1002 193h1v3h-1zM1002 199h1v3h-1zM1002 205h1v3h-1zM1002 211h1v3h-1zM1002 217h1v3h-1zM1002 223h1v3h-1zM1002 229h1v3h-1zM1002 235h1v3h-1zM1002 241h1v3h-1zM1002 247h1v3h-1zM1002 253h1v3h-1zM1002 259h1v3h-1zM1002 265h1v3h-1zM1002 271h1v3h-1zM1002 277h1v3h-1zM1002 283h1v3h-1zM1002 289h1v3h-1zM1002 295h1v3h-1zM1002 301h1v3h-1zM1002 307h1v3h-1zM1002 313h1v3h-1zM1002 319h1v3h-1zM1002 325h1v3h-1zM1002 331h1v3h-1zM1002 337h1v3h-1zM1002 343h1v3h-1zM1002 349h1v3h-1zM1002 355h1v3h-1zM1002 361h1v3h-1zM1002 367h1v3h-1zM1002 373h1v3h-1zM1002 379h1v3h-1zM1002 385h1v3h-1zM1002 391h1v3h-1zM1002 397h1v3h-1zM1002 403h1v3h-1zM1002 409h1v3h-1zM1002 415h1v3h-1zM1002 421h1v3h-1zM1002 427h1v3h-1zM1002 433h1v3h-1zM1002 439h1v3h-1zM1002 445h1v3h-1zM1002 451h1v3h-1zM1002 457h1v3h-1zM1002 463h1v3h-1zM1002 469h1v3h-1zM1002 475h1v3h-1zM1002 481h1v3h-1zM1002 487h1v3h-1zM1002 493h1v3h-1zM1002 499h1v3h-1zM1002 505h1v3h-1zM1002 511h1v3h-1zM1002 517h1v3h-1zM1002 523h1v3h-1zM1002 529h1v3h-1zM1002 535h1v3h-1zM1002 541h1v3h-1zM1002 547h1v3h-1zM1002 553h1v3h-1zM1002 559h1v3h-1zM1002 565h1v3h-1zM1002 571h1v3h-1zM1002 577h1v3h-1zM1002 583h1v3h-1zM1002 589h1v3h-1zM1002 595h1v3h-1zM1002 601h1v3h-1zM1002 607h1v3h-1zM1002 613h1v3h-1zM1002 619h1v3h-1zM1002 625h1v3h-1zM1002 631h1v3h-1zM1002 637h1v3h-1zM1002 643h1v3h-1zM1002 649h1v3h-1zM1002 655h1v3h-1zM1002 661h1v3h-1zM1002 667h1v3h-1zM1002 673h1v3h-1zM1002 679h1v3h-1zM1002 685h1v3h-1zM1002 691h1v3h-1zM1002 697h1v3h-1zM1002 703h1v3h-1zM1002 709h1v3h-1zM1002 715h1v3h-1zM1002 721h1v3h-1zM1002 727h1v2h-1zM1002 729h1v4h-1zM1092 109h1v3h-1zM1092 115h1v3h-1zM1092 121h1v3h-1zM1092 127h1v3h-1zM1092 133h1v3h-1zM1092 139h1v3h-1zM1092 145h1v3h-1zM1092 151h1v3h-1zM1092 157h1v3h-1zM1092 163h1v3h-1zM1092 169h1v3h-1zM1092 175h1v3h-1zM1092 181h1v3h-1zM1092 187h1v3h-1zM1092 193h1v3h-1zM1092 199h1v3h-1zM1092 205h1v3h-1zM1092 211h1v3h-1zM1092 217h1v3h-1zM1092 223h1v3h-1zM1092 229h1v3h-1zM1092 235h1v3h-1zM1092 241h1v3h-1zM1092 247h1v3h-1zM1092 253h1v3h-1zM1092 259h1v3h-1zM1092 265h1v3h-1zM1092 271h1v3h-1zM1092 277h1v3h-1zM1092 283h1v3h-1zM1092 289h1v3h-1zM1092 295h1v3h-1zM1092 301h1v3h-1zM1092 307h1v3h-1zM1092 313h1v3h-1zM1092 319h1v3h-1zM1092 325h1v3h-1zM1092 331h1v3h-1zM1092 337h1v3h-1zM1092 343h1v3h-1zM1092 349h1v3h-1zM1092 355h1v3h-1zM1092 361h1v3h-1zM1092 367h1v3h-1zM1092 373h1v3h-1zM1092 379h1v3h-1zM1092 385h1v3h-1zM1092 391h1v3h-1zM1092 397h1v3h-1zM1092 403h1v3h-1zM1092 409h1v3h-1zM1092 415h1v3h-1zM1092 421h1v3h-1zM1092 427h1v3h-1zM1092 433h1v3h-1zM1092 439h1v3h-1zM1092 445h1v3h-1zM1092 451h1v3h-1zM1092 457h1v3h-1zM1092 463h1v3h-1zM1092 469h1v3h-1zM1092 475h1v3h-1zM1092 481h1v3h-1zM1092 487h1v3h-1zM1092 493h1v3h-1zM1092 499h1v3h-1zM1092 505h1v3h-1zM1092 511h1v3h-1zM1092 517h1v3h-1zM1092 523h1v3h-1zM1092 529h1v3h-1zM1092 535h1v3h-1zM1092 541h1v3h-1zM1092 547h1v3h-1zM1092 553h1v3h-1zM1092 559h1v3h-1zM1092 565h1v3h-1zM1092 571h1v3h-1zM1092 577h1v3h-1zM1092 583h1v3h-1zM1092 589h1v3h-1zM1092 595h1v3h-1zM1092 601h1v3h-1zM1092 607h1v3h-1zM1092 613h1v3h-1zM1092 619h1v3h-1zM1092 625h1v3h-1zM1092 631h1v3h-1zM1092 637h1v3h-1zM1092 643h1v3h-1zM1092 649h1v3h-1zM1092 655h1v3h-1zM1092 661h1v3h-1zM1092 667h1v3h-1zM1092 673h1v3h-1zM1092 679h1v3h-1zM1092 685h1v3h-1zM1092 691h1v3h-1zM1092 697h1v3h-1zM1092 703h1v3h-1zM1092 709h1v3h-1zM1092 715h1v3h-1zM1092 721h1v3h-1zM1092 727h1v2h-1zM1092 729h1v4h-1zM1182 109h1v3h-1zM1182 115h1v3h-1zM1182 121h1v3h-1zM1182 127h1v3h-1zM1182 133h1v3h-1zM1182 139h1v3h-1zM1182 145h1v3h-1zM1182 151h1v3h-1zM1182 157h1v3h-1zM1182 163h1v3h-1zM1182 169h1v3h-1zM1182 175h1v3h-1zM1182 181h1v3h-1zM1182 187h1v3h-1zM1182 193h1v3h-1zM1182 199h1v3h-1zM1182 205h1v3h-1zM1182 211h1v3h-1zM1182 217h1v3h-1zM1182 223h1v3h-1zM1182 229h1v3h-1zM1182 235h1v3h-1zM1182 241h1v3h-1zM1182 247h1v3h-1zM1182 253h1v3h-1zM1182 259h1v3h-1zM1182 265h1v3h-1zM1182 271h1v3h-1zM1182 277h1v3h-1zM1182 283h1v3h-1zM1182 289h1v3h-1zM1182 295h1v3h-1zM1182 301h1v3h-1zM1182 307h1v3h-1zM1182 313h1v3h-1zM1182 319h1v3h-1zM1182 325h1v3h-1zM1182 331h1v3h-1zM1182 337h1v3h-1zM1182 343h1v3h-1zM1182 349h1v3h-1zM1182 355h1v3h-1zM1182 361h1v3h-1zM1182 367h1v3h-1zM1182 373h1v3h-1zM1182 379h1v3h-1zM1182 385h1v3h-1zM1182 391h1v3h-1zM1182 397h1v3h-1zM1182 403h1v3h-1zM1182 409h1v3h-1zM1182 415h1v3h-1zM1182 421h1v3h-1zM1182 427h1v3h-1zM1182 433h1v3h-1zM1182 439h1v3h-1zM1182 445h1v3h-1zM1182 451h1v3h-1zM1182 457h1v3h-1zM1182 463h1v3h-1zM1182 469h1v3h-1zM1182 475h1v3h-1zM1182 481h1v3h-1zM1182 487h1v3h-1zM1182 493h1v3h-1zM1182 499h1v3h-1zM1182 505h1v3h-1zM1182 511h1v3h-1zM1182 517h1v3h-1zM1182 523h1v3h-1zM1182 529h1v3h-1zM1182 535h1v3h-1zM1182 541h1v3h-1zM1182 547h1v3h-1zM1182 553h1v3h-1zM1182 559h1v3h-1zM1182 565h1v3h-1zM1182 571h1v3h-1zM1182 577h1v3h-1zM1182 583h1v3h-1zM1182 589h1v3h-1zM1182 595h1v3h-1zM1182 601h1v3h-1zM1182 607h1v3h-1zM1182 613h1v3h-1zM1182 619h1v3h-1zM1182 625h1v3h-1zM1182 631h1v3h-1zM1182 637h1v3h-1zM1182 643h1v3h-1zM1182 649h1v3h-1zM1182 655h1v3h-1zM1182 661h1v3h-1zM1182 667h1v3h-1zM1182 673h1v3h-1zM1182 679h1v3h-1zM1182 685h1v3h-1zM1182 691h1v3h-1zM1182 697h1v3h-1zM1182 703h1v3h-1zM1182 709h1v3h-1zM1182 715h1v3h-1zM1182 721h1v3h-1zM1182 727h1v2h-1zM1182 729h1v4h-1zM33 156h2v1h-2zM43 156h2v1h-2zM53 156h2v1h-2zM63 156h2v1h-2zM73 156h2v1h-2zM83 156h2v1h-2zM93 156h2v1h-2zM103 156h2v1h-2zM113 156h2v1h-2zM123 156h2v1h-2zM133 156h2v1h-2zM143 156h2v1h-2zM153 156h2v1h-2zM163 156h2v1h-2zM173 156h2v1h-2zM183 156h2v1h-2zM193 156h2v1h-2zM203 156h2v1h-2zM213 156h2v1h-2zM223 156h2v1h-2zM233 156h2v1h-2zM243 156h2v1h-2zM253 156h2v1h-2zM263 156h2v1h-2zM273 156h2v1h-2zM283 156h2v1h-2zM293 156h2v1h-2zM303 156h2v1h-2zM313 156h2v1h-2zM323 156h2v1h-2zM333 156h2v1h-2zM343 156h2v1h-2zM353 156h2v1h-2zM363 156h2v1h-2zM373 156h2v1h-2zM383 156h2v1h-2zM393 156h2v1h-2zM403 156h2v1h-2zM413 156h2v1h-2zM423 156h2v1h-2zM433 156h2v1h-2zM443 156h2v1h-2zM453 156h2v1h-2zM463 156h2v1h-2zM473 156h2v1h-2zM483 156h2v1h-2zM493 156h2v1h-2zM503 156h2v1h-2zM513 156h2v1h-2zM523 156h2v1h-2zM533 156h2v1h-2zM543 156h2v1h-2zM553 156h2v1h-2zM563 156h2v1h-2zM573 156h2v1h-2zM583 156h2v1h-2zM593 156h2v1h-2zM603 156h2v1h-2zM613 156h2v1h-2zM623 156h2v1h-2zM633 156h2v1h-2zM643 156h2v1h-2zM653 156h2v1h-2zM663 156h2v1h-2zM673 156h2v1h-2zM683 156h2v1h-2zM693 156h2v1h-2zM703 156h2v1h-2zM713 156h2v1h-2zM723 156h2v1h-2zM733 156h2v1h-2zM743 156h2v1h-2zM753 156h2v1h-2zM763 156h2v1h-2zM773 156h2v1h-2zM783 156h2v1h-2zM793 156h2v1h-2zM803 156h2v1h-2zM813 156h2v1h-2zM823 156h2v1h-2zM833 156h2v1h-2zM843 156h2v1h-2zM853 156h2v1h-2zM863 156h2v1h-2zM873 156h2v1h-2zM883 156h2v1h-2zM893 156h2v1h-2zM903 156h2v1h-2zM913 156h2v1h-2zM923 156h2v1h-2zM933 156h2v1h-2zM943 156h2v1h-2zM953 156h2v1h-2zM963 156h2v1h-2zM973 156h2v1h-2zM983 156h2v1h-2zM993 156h2v1h-2zM1003 156h2v1h-2zM1013 156h2v1h-2zM1023 156h2v1h-2zM1033 156h2v1h-2zM1043 156h2v1h-2zM1053 156h2v1h-2zM1063 156h2v1h-2zM1073 156h2v1h-2zM1083 156h2v1h-2zM1093 156h2v1h-2zM1103 156h2v1h-2zM1113 156h2v1h-2zM1123 156h2v1h-2zM1133 156h2v1h-2zM1143 156h2v1h-2zM1153 156h2v1h-2zM1163 156h2v1h-2zM1173 156h2v1h-2zM1183 156h2v1h-2zM1193 156h2v1h-2zM1203 156h2v1h-2zM1213 156h2v1h-2zM1220 157h4v1h-4zM33 228h2v1h-2zM43 228h2v1h-2zM53 228h2v1h-2zM63 228h2v1h-2zM73 228h2v1h-2zM83 228h2v1h-2zM93 228h2v1h-2zM103 228h2v1h-2zM113 228h2v1h-2zM123 228h2v1h-2zM133 228h2v1h-2zM143 228h2v1h-2zM153 228h2v1h-2zM163 228h2v1h-2zM173 228h2v1h-2zM183 228h2v1h-2zM193 228h2v1h-2zM203 228h2v1h-2zM213 228h2v1h-2zM223 228h2v1h-2zM233 228h2v1h-2zM243 228h2v1h-2zM253 228h2v1h-2zM263 228h2v1h-2zM273 228h2v1h-2zM283 228h2v1h-2zM293 228h2v1h-2zM303 228h2v1h-2zM313 228h2v1h-2zM323 228h2v1h-2zM333 228h2v1h-2zM343 228h2v1h-2zM353 228h2v1h-2zM363 228h2v1h-2zM373 228h2v1h-2zM383 228h2v1h-2zM393 228h2v1h-2zM403 228h2v1h-2zM413 228h2v1h-2zM423 228h2v1h-2zM433 228h2v1h-2zM443 228h2v1h-2zM453 228h2v1h-2zM463 228h2v1h-2zM473 228h2v1h-2zM483 228h2v1h-2zM493 228h2v1h-2zM503 228h2v1h-2zM513 228h2v1h-2zM523 228h2v1h-2zM533 228h2v1h-2zM543 228h2v1h-2zM553 228h2v1h-2zM563 228h2v1h-2zM573 228h2v1h-2zM583 228h2v1h-2zM593 228h2v1h-2zM603 228h2v1h-2zM613 228h2v1h-2zM623 228h2v1h-2zM633 228h2v1h-2zM643 228h2v1h-2zM653 228h2v1h-2zM663 228h2v1h-2zM673 228h2v1h-2zM683 228h2v1h-2zM693 228h2v1h-2zM703 228h2v1h-2zM713 228h2v1h-2zM723 228h2v1h-2zM733 228h2v1h-2zM743 228h2v1h-2zM753 228h2v1h-2zM763 228h2v1h-2zM773 228h2v1h-2zM783 228h2v1h-2zM793 228h2v1h-2zM803 228h2v1h-2zM813 228h2v1h-2zM823 228h2v1h-2zM833 228h2v1h-2zM843 228h2v1h-2zM853 228h2v1h-2zM863 228h2v1h-2zM873 228h2v1h-2zM883 228h2v1h-2zM893 228h2v1h-2zM903 228h2v1h-2zM913 228h2v1h-2zM923 228h2v1h-2zM933 228h2v1h-2zM943 228h2v1h-2zM953 228h2v1h-2zM963 228h2v1h-2zM973 228h2v1h-2zM983 228h2v1h-2zM993 228h2v1h-2zM1003 228h2v1h-2zM1013 228h2v1h-2zM1023 228h2v1h-2zM1033 228h2v1h-2zM1043 228h2v1h-2zM1053 228h2v1h-2zM1063 228h2v1h-2zM1073 228h2v1h-2zM1083 228h2v1h-2zM1093 228h2v1h-2zM1103 228h2v1h-2zM1113 228h2v1h-2zM1123 228h2v1h-2zM1133 228h2v1h-2zM1143 228h2v1h-2zM1153 228h2v1h-2zM1163 228h2v1h-2zM1173 228h2v1h-2zM1183 228h2v1h-2zM1193 228h2v1h-2zM1203 228h2v1h-2zM1213 228h2v1h-2zM1220 229h4v1h-4zM33 299h2v1h-2zM43 299h2v1h-2zM53 299h2v1h-2zM63 299h2v1h-2zM73 299h2v1h-2zM83 299h2v1h-2zM93 299h2v1h-2zM103 299h2v1h-2zM113 299h2v1h-2zM123 299h2v1h-2zM133 299h2v1h-2zM143 299h2v1h-2zM153 299h2v1h-2zM163 299h2v1h-2zM173 299h2v1h-2zM183 299h2v1h-2zM193 299h2v1h-2zM203 299h2v1h-2zM213 299h2v1h-2zM223 299h2v1h-2zM233 299h2v1h-2zM243 299h2v1h-2zM253 299h2v1h-2zM263 299h2v1h-2zM273 299h2v1h-2zM283 299h2v1h-2zM293 299h2v1h-2zM303 299h2v1h-2zM313 299h2v1h-2zM323 299h2v1h-2zM333 299h2v1h-2zM343 299h2v1h-2zM353 299h2v1h-2zM363 299h2v1h-2zM373 299h2v1h-2zM383 299h2v1h-2zM393 299h2v1h-2zM403 299h2v1h-2zM413 299h2v1h-2zM423 299h2v1h-2zM433 299h2v1h-2zM443 299h2v1h-2zM453 299h2v1h-2zM463 299h2v1h-2zM473 299h2v1h-2zM483 299h2v1h-2zM493 299h2v1h-2zM503 299h2v1h-2zM513 299h2v1h-2zM523 299h2v1h-2zM533 299h2v1h-2zM543 299h2v1h-2zM553 299h2v1h-2zM563 299h2v1h-2zM573 299h2v1h-2zM583 299h2v1h-2zM593 299h2v1h-2zM603 299h2v1h-2zM613 299h2v1h-2zM623 299h2v1h-2zM633 299h2v1h-2zM643 299h2v1h-2zM653 299h2v1h-2zM663 299h2v1h-2zM673 299h2v1h-2zM683 299h2v1h-2zM693 299h2v1h-2zM703 299h2v1h-2zM713 299h2v1h-2zM723 299h2v1h-2zM733 299h2v1h-2zM743 299h2v1h-2zM753 299h2v1h-2zM763 299h2v1h-2zM773 299h2v1h-2zM783 299h2v1h-2zM793 299h2v1h-2zM803 299h2v1h-2zM813 299h2v1h-2zM823 299h2v1h-2zM833 299h2v1h-2zM843 299h2v1h-2zM853 299h2v1h-2zM863 299h2v1h-2zM873 299h2v1h-2zM883 299h2v1h-2zM893 299h2v1h-2zM903 299h2v1h-2zM913 299h2v1h-2zM923 299h2v1h-2zM933 299h2v1h-2zM943 299h2v1h-2zM953 299h2v1h-2zM963 299h2v1h-2zM973 299h2v1h-2zM983 299h2v1h-2zM993 299h2v1h-2zM1003 299h2v1h-2zM1013 299h2v1h-2zM1023 299h2v1h-2zM1033 299h2v1h-2zM1043 299h2v1h-2zM1053 299h2v1h-2zM1063 299h2v1h-2zM1073 299h2v1h-2zM1083 299h2v1h-2zM1093 299h2v1h-2zM1103 299h2v1h-2zM1113 299h2v1h-2zM1123 299h2v1h-2zM1133 299h2v1h-2zM1143 299h2v1h-2zM1153 299h2v1h-2zM1163 299h2v1h-2zM1173 299h2v1h-2zM1183 299h2v1h-2zM1193 299h2v1h-2zM1203 299h2v1h-2zM1213 299h2v1h-2zM1220 300h4v1h-4zM33 371h2v1h-2zM43 371h2v1h-2zM53 371h2v1h-2zM63 371h2v1h-2zM73 371h2v1h-2zM83 371h2v1h-2zM93 371h2v1h-2zM103 371h2v1h-2zM113 371h2v1h-2zM123 371h2v1h-2zM133 371h2v1h-2zM143 371h2v1h-2zM153 371h2v1h-2zM163 371h2v1h-2zM173 371h2v1h-2zM183 371h2v1h-2zM193 371h2v1h-2zM203 371h2v1h-2zM213 371h2v1h-2zM223 371h2v1h-2zM233 371h2v1h-2zM243 371h2v1h-2zM253 371h2v1h-2zM263 371h2v1h-2zM273 371h2v1h-2zM283 371h2v1h-2zM293 371h2v1h-2zM303 371h2v1h-2zM313 371h2v1h-2zM323 371h2v1h-2zM333 371h2v1h-2zM343 371h2v1h-2zM353 371h2v1h-2zM363 371h2v1h-2zM373 371h2v1h-2zM383 371h2v1h-2zM393 371h2v1h-2zM403 371h2v1h-2zM413 371h2v1h-2zM423 371h2v1h-2zM433 371h2v1h-2zM443 371h2v1h-2zM453 371h2v1h-2zM463 371h2v1h-2zM473 371h2v1h-2zM483 371h2v1h-2zM493 371h2v1h-2zM503 371h2v1h-2zM513 371h2v1h-2zM523 371h2v1h-2zM533 371h2v1h-2zM543 371h2v1h-2zM553 371h2v1h-2zM563 371h2v1h-2zM573 371h2v1h-2zM583 371h2v1h-2zM593 371h2v1h-2zM603 371h2v1h-2zM613 371h2v1h-2zM623 371h2v1h-2zM633 371h2v1h-2zM643 371h2v1h-2zM653 371h2v1h-2zM663 371h2v1h-2zM673 371h2v1h-2zM683 371h2v1h-2zM693 371h2v1h-2zM703 371h2v1h-2zM713 371h2v1h-2zM723 371h2v1h-2zM733 371h2v1h-2zM743 371h2v1h-2zM753 371h2v1h-2zM763 371h2v1h-2zM773 371h2v1h-2zM783 371h2v1h-2zM793 371h2v1h-2zM803 371h2v1h-2zM813 371h2v1h-2zM823 371h2v1h-2zM833 371h2v1h-2zM843 371h2v1h-2zM853 371h2v1h-2zM863 371h2v1h-2zM873 371h2v1h-2zM883 371h2v1h-2zM893 371h2v1h-2zM903 371h2v1h-2zM913 371h2v1h-2zM923 371h2v1h-2zM933 371h2v1h-2zM943 371h2v1h-2zM953 371h2v1h-2zM963 371h2v1h-2zM973 371h2v1h-2zM983 371h2v1h-2zM993 371h2v1h-2zM1003 371h2v1h-2zM1013 371h2v1h-2zM1023 371h2v1h-2zM1033 371h2v1h-2zM1043 371h2v1h-2zM1053 371h2v1h-2zM1063 371h2v1h-2zM1073 371h2v1h-2zM1083 371h2v1h-2zM1093 371h2v1h-2zM1103 371h2v1h-2zM1113 371h2v1h-2zM1123 371h2v1h-2zM1133 371h2v1h-2zM1143 371h2v1h-2zM1153 371h2v1h-2zM1163 371h2v1h-2zM1173 371h2v1h-2zM1183 371h2v1h-2zM1193 371h2v1h-2zM1203 371h2v1h-2zM1213 371h2v1h-2zM1220 372h4v1h-4zM33 442h2v1h-2zM43 442h2v1h-2zM53 442h2v1h-2zM63 442h2v1h-2zM73 442h2v1h-2zM83 442h2v1h-2zM93 442h2v1h-2zM103 442h2v1h-2zM113 442h2v1h-2zM123 442h2v1h-2zM133 442h2v1h-2zM143 442h2v1h-2zM153 442h2v1h-2zM163 442h2v1h-2zM173 442h2v1h-2zM183 442h2v1h-2zM193 442h2v1h-2zM203 442h2v1h-2zM213 442h2v1h-2zM223 442h2v1h-2zM233 442h2v1h-2zM243 442h2v1h-2zM253 442h2v1h-2zM263 442h2v1h-2zM273 442h2v1h-2zM283 442h2v1h-2zM293 442h2v1h-2zM303 442h2v1h-2zM313 442h2v1h-2zM323 442h2v1h-2zM333 442h2v1h-2zM343 442h2v1h-2zM353 442h2v1h-2zM363 442h2v1h-2zM373 442h2v1h-2zM383 442h2v1h-2zM393 442h2v1h-2zM403 442h2v1h-2zM413 442h2v1h-2zM423 442h2v1h-2zM433 442h2v1h-2zM443 442h2v1h-2zM453 442h2v1h-2zM463 442h2v1h-2zM473 442h2v1h-2zM483 442h2v1h-2zM493 442h2v1h-2zM503 442h2v1h-2zM513 442h2v1h-2zM523 442h2v1h-2zM533 442h2v1h-2zM543 442h2v1h-2zM553 442h2v1h-2zM563 442h2v1h-2zM573 442h2v1h-2zM583 442h2v1h-2zM593 442h2v1h-2zM603 442h2v1h-2zM613 442h2v1h-2zM623 442h2v1h-2zM633 442h2v1h-2zM643 442h2v1h-2zM653 442h2v1h-2zM663 442h2v1h-2zM673 442h2v1h-2zM683 442h2v1h-2zM693 442h2v1h-2zM703 442h2v1h-2zM713 442h2v1h-2zM723 442h2v1h-2zM733 442h2v1h-2zM743 442h2v1h-2zM753 442h2v1h-2zM763 442h2v1h-2zM773 442h2v1h-2zM783 442h2v1h-2zM793 442h2v1h-2zM803 442h2v1h-2zM813 442h2v1h-2zM823 442h2v1h-2zM833 442h2v1h-2zM843 442h2v1h-2zM853 442h2v1h-2zM863 442h2v1h-2zM873 442h2v1h-2zM883 442h2v1h-2zM893 442h2v1h-2zM903 442h2v1h-2zM913 442h2v1h-2zM923 442h2v1h-2zM933 442h2v1h-2zM943 442h2v1h-2zM953 442h2v1h-2zM963 442h2v1h-2zM973 442h2v1h-2zM983 442h2v1h-2zM993 442h2v1h-2zM1003 442h2v1h-2zM1013 442h2v1h-2zM1023 442h2v1h-2zM1033 442h2v1h-2zM1043 442h2v1h-2zM1053 442h2v1h-2zM1063 442h2v1h-2zM1073 442h2v1h-2zM1083 442h2v1h-2zM1093 442h2v1h-2zM1103 442h2v1h-2zM1113 442h2v1h-2zM1123 442h2v1h-2zM1133 442h2v1h-2zM1143 442h2v1h-2zM1153 442h2v1h-2zM1163 442h2v1h-2zM1173 442h2v1h-2zM1183 442h2v1h-2zM1193 442h2v1h-2zM1203 442h2v1h-2zM1213 442h2v1h-2zM1220 443h4v1h-4zM33 514h2v1h-2zM43 514h2v1h-2zM53 514h2v1h-2zM63 514h2v1h-2zM73 514h2v1h-2zM83 514h2v1h-2zM93 514h2v1h-2zM103 514h2v1h-2zM113 514h2v1h-2zM123 514h2v1h-2zM133 514h2v1h-2zM143 514h2v1h-2zM153 514h2v1h-2zM163 514h2v1h-2zM173 514h2v1h-2zM183 514h2v1h-2zM193 514h2v1h-2zM203 514h2v1h-2zM213 514h2v1h-2zM223 514h2v1h-2zM233 514h2v1h-2zM243 514h2v1h-2zM253 514h2v1h-2zM263 514h2v1h-2zM273 514h2v1h-2zM283 514h2v1h-2zM293 514h2v1h-2zM303 514h2v1h-2zM313 514h2v1h-2zM323 514h2v1h-2zM333 514h2v1h-2zM343 514h2v1h-2zM353 514h2v1h-2zM363 514h2v1h-2zM373 514h2v1h-2zM383 514h2v1h-2zM393 514h2v1h-2zM403 514h2v1h-2zM413 514h2v1h-2zM423 514h2v1h-2zM433 514h2v1h-2zM443 514h2v1h-2zM453 514h2v1h-2zM463 514h2v1h-2zM473 514h2v1h-2zM483 514h2v1h-2zM493 514h2v1h-2zM503 514h2v1h-2zM513 514h2v1h-2zM523 514h2v1h-2zM533 514h2v1h-2zM543 514h2v1h-2zM553 514h2v1h-2zM563 514h2v1h-2zM573 514h2v1h-2zM583 514h2v1h-2zM593 514h2v1h-2zM603 514h2v1h-2zM613 514h2v1h-2zM623 514h2v1h-2zM633 514h2v1h-2zM643 514h2v1h-2zM653 514h2v1h-2zM663 514h2v1h-2zM673 514h2v1h-2zM683 514h2v1h-2zM693 514h2v1h-2zM703 514h2v1h-2zM713 514h2v1h-2zM723 514h2v1h-2zM733 514h2v1h-2zM743 514h2v1h-2zM753 514h2v1h-2zM763 514h2v1h-2zM773 514h2v1h-2zM783 514h2v1h-2zM793 514h2v1h-2zM803 514h2v1h-2zM813 514h2v1h-2zM823 514h2v1h-2zM833 514h2v1h-2zM843 514h2v1h-2zM853 514h2v1h-2zM863 514h2v1h-2zM873 514h2v1h-2zM883 514h2v1h-2zM893 514h2v1h-2zM903 514h2v1h-2zM913 514h2v1h-2zM923 514h2v1h-2zM933 514h2v1h-2zM943 514h2v1h-2zM953 514h2v1h-2zM963 514h2v1h-2zM973 514h2v1h-2zM983 514h2v1h-2zM993 514h2v1h-2zM1003 514h2v1h-2zM1013 514h2v1h-2zM1023 514h2v1h-2zM1033 514h2v1h-2zM1043 514h2v1h-2zM1053 514h2v1h-2zM1063 514h2v1h-2zM1073 514h2v1h-2zM1083 514h2v1h-2zM1093 514h2v1h-2zM1103 514h2v1h-2zM1113 514h2v1h-2zM1123 514h2v1h-2zM1133 514h2v1h-2zM1143 514h2v1h-2zM1153 514h2v1h-2zM1163 514h2v1h-2zM1173 514h2v1h-2zM1183 514h2v1h-2zM1193 514h2v1h-2zM1203 514h2v1h-2zM1213 514h2v1h-2zM1220 515h4v1h-4zM33 585h2v1h-2zM43 585h2v1h-2zM53 585h2v1h-2zM63 585h2v1h-2zM73 585h2v1h-2zM83 585h2v1h-2zM93 585h2v1h-2zM103 585h2v1h-2zM113 585h2v1h-2zM123 585h2v1h-2zM133 585h2v1h-2zM143 585h2v1h-2zM153 585h2v1h-2zM163 585h2v1h-2zM173 585h2v1h-2zM183 585h2v1h-2zM193 585h2v1h-2zM203 585h2v1h-2zM213 585h2v1h-2zM223 585h2v1h-2zM233 585h2v1h-2zM243 585h2v1h-2zM253 585h2v1h-2zM263 585h2v1h-2zM273 585h2v1h-2zM283 585h2v1h-2zM293 585h2v1h-2zM303 585h2v1h-2zM313 585h2v1h-2zM323 585h2v1h-2zM333 585h2v1h-2zM343 585h2v1h-2zM353 585h2v1h-2zM363 585h2v1h-2zM373 585h2v1h-2zM383 585h2v1h-2zM393 585h2v1h-2zM403 585h2v1h-2zM413 585h2v1h-2zM423 585h2v1h-2zM433 585h2v1h-2zM443 585h2v1h-2zM453 585h2v1h-2zM463 585h2v1h-2zM473 585h2v1h-2zM483 585h2v1h-2zM493 585h2v1h-2zM503 585h2v1h-2zM513 585h2v1h-2zM523 585h2v1h-2zM533 585h2v1h-2zM543 585h2v1h-2zM553 585h2v1h-2zM563 585h2v1h-2zM573 585h2v1h-2zM583 585h2v1h-2zM593 585h2v1h-2zM603 585h2v1h-2zM613 585h2v1h-2zM623 585h2v1h-2zM633 585h2v1h-2zM643 585h2v1h-2zM653 585h2v1h-2zM663 585h2v1h-2zM673 585h2v1h-2zM683 585h2v1h-2zM693 585h2v1h-2zM703 585h2v1h-2zM713 585h2v1h-2zM723 585h2v1h-2zM733 585h2v1h-2zM743 585h2v1h-2zM753 585h2v1h-2zM763 585h2v1h-2zM773 585h2v1h-2zM783 585h2v1h-2zM793 585h2v1h-2zM803 585h2v1h-2zM813 585h2v1h-2zM823 585h2v1h-2zM833 585h2v1h-2zM843 585h2v1h-2zM853 585h2v1h-2zM863 585h2v1h-2zM873 585h2v1h-2zM883 585h2v1h-2zM893 585h2v1h-2zM903 585h2v1h-2zM913 585h2v1h-2zM923 585h2v1h-2zM933 585h2v1h-2zM943 585h2v1h-2zM953 585h2v1h-2zM963 585h2v1h-2zM973 585h2v1h-2zM983 585h2v1h-2zM993 585h2v1h-2zM1003 585h2v1h-2zM1013 585h2v1h-2zM1023 585h2v1h-2zM1033 585h2v1h-2zM1043 585h2v1h-2zM1053 585h2v1h-2zM1063 585h2v1h-2zM1073 585h2v1h-2zM1083 585h2v1h-2zM1093 585h2v1h-2zM1103 585h2v1h-2zM1113 585h2v1h-2zM1123 585h2v1h-2zM1133 585h2v1h-2zM1143 585h2v1h-2zM1153 585h2v1h-2zM1163 585h2v1h-2zM1173 585h2v1h-2zM1183 585h2v1h-2zM1193 585h2v1h-2zM1203 585h2v1h-2zM1213 585h2v1h-2zM1220 586h4v1h-4zM33 657h2v1h-2zM43 657h2v1h-2zM53 657h2v1h-2zM63 657h2v1h-2zM73 657h2v1h-2zM83 657h2v1h-2zM93 657h2v1h-2zM103 657h2v1h-2zM113 657h2v1h-2zM123 657h2v1h-2zM133 657h2v1h-2zM143 657h2v1h-2zM153 657h2v1h-2zM163 657h2v1h-2zM173 657h2v1h-2zM183 657h2v1h-2zM193 657h2v1h-2zM203 657h2v1h-2zM213 657h2v1h-2zM223 657h2v1h-2zM233 657h2v1h-2zM243 657h2v1h-2zM253 657h2v1h-2zM263 657h2v1h-2zM273 657h2v1h-2zM283 657h2v1h-2zM293 657h2v1h-2zM303 657h2v1h-2zM313 657h2v1h-2zM323 657h2v1h-2zM333 657h2v1h-2zM343 657h2v1h-2zM353 657h2v1h-2zM363 657h2v1h-2zM373 657h2v1h-2zM383 657h2v1h-2zM393 657h2v1h-2zM403 657h2v1h-2zM413 657h2v1h-2zM423 657h2v1h-2zM433 657h2v1h-2zM443 657h2v1h-2zM453 657h2v1h-2zM463 657h2v1h-2zM473 657h2v1h-2zM483 657h2v1h-2zM493 657h2v1h-2zM503 657h2v1h-2zM513 657h2v1h-2zM523 657h2v1h-2zM533 657h2v1h-2zM543 657h2v1h-2zM553 657h2v1h-2zM563 657h2v1h-2zM573 657h2v1h-2zM583 657h2v1h-2zM593 657h2v1h-2zM603 657h2v1h-2zM613 657h2v1h-2zM623 657h2v1h-2zM633 657h2v1h-2zM643 657h2v1h-2zM653 657h2v1h-2zM663 657h2v1h-2zM673 657h2v1h-2zM683 657h2v1h-2zM693 657h2v1h-2zM703 657h2v1h-2zM713 657h2v1h-2zM723 657h2v1h-2zM733 657h2v1h-2zM743 657h2v1h-2zM753 657h2v1h-2zM763 657h2v1h-2zM773 657h2v1h-2zM783 657h2v1h-2zM793 657h2v1h-2zM803 657h2v1h-2zM813 657h2v1h-2zM823 657h2v1h-2zM833 657h2v1h-2zM843 657h2v1h-2zM853 657h2v1h-2zM863 657h2v1h-2zM873 657h2v1h-2zM883 657h2v1h-2zM893 657h2v1h-2zM903 657h2v1h-2zM913 657h2v1h-2zM923 657h2v1h-2zM933 657h2v1h-2zM943 657h2v1h-2zM953 657h2v1h-2zM963 657h2v1h-2zM973 657h2v1h-2zM983 657h2v1h-2zM993 657h2v1h-2zM1003 657h2v1h-2zM1013 657h2v1h-2zM1023 657h2v1h-2zM1033 657h2v1h-2zM1043 657h2v1h-2zM1053 657h2v1h-2zM1063 657h2v1h-2zM1073 657h2v1h-2zM1083 657h2v1h-2zM1093 657h2v1h-2zM1103 657h2v1h-2zM1113 657h2v1h-2zM1123 657h2v1h-2zM1133 657h2v1h-2zM1143 657h2v1h-2zM1153 657h2v1h-2zM1163 657h2v1h-2zM1173 657h2v1h-2zM1183 657h2v1h-2zM1193 657h2v1h-2zM1203 657h2v1h-2zM1213 657h2v1h-2zM1220 658h4v1h-4zM33 728h2v1h-2zM43 728h2v1h-2zM53 728h2v1h-2zM63 728h2v1h-2zM73 728h2v1h-2zM83 728h2v1h-2zM93 728h2v1h-2zM103 728h2v1h-2zM113 728h2v1h-2zM123 728h2v1h-2zM133 728h2v1h-2zM143 728h2v1h-2zM153 728h2v1h-2zM163 728h2v1h-2zM173 728h2v1h-2zM183 728h2v1h-2zM193 728h2v1h-2zM203 728h2v1h-2zM213 728h2v1h-2zM223 728h2v1h-2zM233 728h2v1h-2zM243 728h2v1h-2zM253 728h2v1h-2zM263 728h2v1h-2zM273 728h2v1h-2zM283 728h2v1h-2zM293 728h2v1h-2zM303 728h2v1h-2zM313 728h2v1h-2zM323 728h2v1h-2zM333 728h2v1h-2zM343 728h2v1h-2zM353 728h2v1h-2zM363 728h2v1h-2zM373 728h2v1h-2zM383 728h2v1h-2zM393 728h2v1h-2zM403 728h2v1h-2zM413 728h2v1h-2zM423 728h2v1h-2zM433 728h2v1h-2zM443 728h2v1h-2zM453 728h2v1h-2zM463 728h2v1h-2zM473 728h2v1h-2zM483 728h2v1h-2zM493 728h2v1h-2zM503 728h2v1h-2zM513 728h2v1h-2zM523 728h2v1h-2zM533 728h2v1h-2zM543 728h2v1h-2zM553 728h2v1h-2zM563 728h2v1h-2zM573 728h2v1h-2zM583 728h2v1h-2zM593 728h2v1h-2zM603 728h2v1h-2zM613 728h2v1h-2zM623 728h2v1h-2zM633 728h2v1h-2zM643 728h2v1h-2zM653 728h2v1h-2zM663 728h2v1h-2zM673 728h2v1h-2zM683 728h2v1h-2zM693 728h2v1h-2zM703 728h2v1h-2zM713 728h2v1h-2zM723 728h2v1h-2zM733 728h2v1h-2zM743 728h2v1h-2zM753 728h2v1h-2zM763 728h2v1h-2zM773 728h2v1h-2zM783 728h2v1h-2zM793 728h2v1h-2zM803 728h2v1h-2zM813 728h2v1h-2zM823 728h2v1h-2zM833 728h2v1h-2zM843 728h2v1h-2zM853 728h2v1h-2zM863 728h2v1h-2zM873 728h2v1h-2zM883 728h2v1h-2zM893 728h2v1h-2zM903 728h2v1h-2zM913 728h2v1h-2zM923 728h2v1h-2zM933 728h2v1h-2zM943 728h2v1h-2zM953 728h2v1h-2zM963 728h2v1h-2zM973 728h2v1h-2zM983 728h2v1h-2zM993 728h2v1h-2zM1003 728h2v1h-2zM1013 728h2v1h-2zM1023 728h2v1h-2zM1033 728h2v1h-2zM1043 728h2v1h-2zM1053 728h2v1h-2zM1063 728h2v1h-2zM1073 728h2v1h-2zM1083 728h2v1h-2zM1093 728h2v1h-2zM1103 728h2v1h-2zM1113 728h2v1h-2zM1123 728h2v1h-2zM1133 728h2v1h-2zM1143 728h2v1h-2zM1153 728h2v1h-2zM1163 728h2v1h-2zM1173 728h2v1h-2zM1183 728h2v1h-2zM1193 728h2v1h-2zM1203 728h2v1h-2zM1213 728h2v1h-2zM1220 729h4v1h-4z" fill="#949494"/>
<path d="M33 105h1186v625h-1186z M34 106v623h1184v-623z" fill="#fff" fill-rule="evenodd"/>
<rect x="1209" y="106" width="9" height="15" fill="#00ff00" />
<rect x="1209" y="119" width="9" height="2" fill="#00a000" />
<rect x="1211" y="114" width="6" height="6" fill="#fff" />
<rect x="1212" y="115" width="4" height="4" fill="#000" />
<rect x="1213" y="116" width="2" height="2" fill="#fff" />
<rect x="1209" y="721" width="9" height="8" fill="#00ff00" />
<path d="M33 126h17v2h-17zM50 125h18v2h-18zM68 124h18v2h-18zM86 123h18v2h-18zM104 122h18v2h-18zM122 121h19v2h-19zM141 120h18v2h-18zM159 119h18v2h-18zM177 118h18v2h-18zM195 117h18v2h-18zM213 116h19v2h-19zM232 115h18v2h-18zM250 114h19v2h-19zM269 113h19v2h-19zM288 112h18v2h-18zM306 111h19v2h-19zM325 110h18v2h-18zM343 109h17v2h-17zM360 108h17v2h-17zM377 107h16v2h-16zM393 106h17v2h-17zM410 105h16v2h-16zM426 104h17v2h-17zM443 104h16v1h-16zM33 255h11v2h-11zM44 254h19v2h-19zM63 253h18v2h-18zM81 252h18v2h-18zM99 251h18v2h-18zM117 250h18v2h-18zM135 249h18v2h-18zM153 248h18v2h-18zM171 247h19v2h-19zM190 246h18v2h-18zM208 245h18v2h-18zM226 244h19v2h-19zM245 243h18v2h-18zM263 242h19v2h-19zM282 241h18v2h-18zM300 240h19v2h-19zM319 239h19v2h-19zM338 238h17v2h-17zM355 237h17v2h-17zM372 236h16v2h-16zM388 235h17v2h-17zM405 234h16v2h-16zM421 233h17v2h-17zM438 232h16v2h-16zM454 231h17v2h-17zM471 230h16v2h-16zM487 229h17v2h-17zM504 228h15v2h-15zM519 227h16v2h-16zM535 226h16v2h-16zM551 225h16v2h-16zM567 224h16v2h-16zM583 223h15v2h-15zM598 222h16v2h-16zM614 221h16v2h-16zM630 220h16v2h-16zM646 219h14v2h-14zM660 218h14v2h-14zM674 217h13v2h-13zM687 216h14v2h-14zM701 215h14v2h-14zM715 214h13v2h-13zM728 213h14v2h-14zM742 212h14v2h-14zM756 211h13v2h-13zM769 210h14v2h-14zM783 209h13v2h-13zM796 208h15v2h-15zM811 207h16v2h-16zM827 206h15v2h-15zM842 205h16v2h-16zM858 204h15v2h-15zM873 203h16v2h-16zM889 202h15v2h-15zM904 201h16v2h-16zM920 200h15v2h-15zM935 199h15v2h-15zM950 198h17v2h-17zM967 197h16v2h-16zM983 196h16v2h-16zM999 195h16v2h-16zM1015 194h16v2h-16zM1031 193h16v2h-16zM1047 192h16v2h-16zM1063 191h17v2h-17zM1080 190h16v2h-16zM1096 189h15v2h-15zM1111 188h16v2h-16zM1127 187h15v2h-15zM1142 186h16v2h-16zM1158 185h15v2h-15zM1173 184h16v2h-16zM1189 183h16v2h-16zM1205 182h13v2h-13zM33 384h19v2h-19zM52 383h18v2h-18zM70 382h18v2h-18zM88 381h18v2h-18zM106 380h18v2h-18zM124 379h18v2h-18zM142 378h19v2h-19zM161 377h18v2h-18zM179 376h18v2h-18zM197 375h18v2h-18zM215 374h19v2h-19zM234 373h18v2h-18zM252 372h19v2h-19zM271 371h18v2h-18zM289 370h19v2h-19zM308 369h18v2h-18zM326 368h19v2h-19zM345 367h17v2h-17zM362 366h17v2h-17zM379 365h16v2h-16zM395 364h16v2h-16zM411 363h17v2h-17zM428 362h16v2h-16zM444 361h17v2h-17zM461 360h16v2h-16zM477 359h17v2h-17zM494 358h16v2h-16zM510 357h16v2h-16zM526 356h16v2h-16zM542 355h15v2h-15zM557 354h16v2h-16zM573 353h16v2h-16zM589 352h16v2h-16zM605 351h15v2h-15zM620 350h16v2h-16zM636 349h16v2h-16zM652 348h14v2h-14zM666 347h13v2h-13zM679 346h14v2h-14zM693 345h13v2h-13zM706 344h14v2h-14zM720 343h14v2h-14zM734 342h13v2h-13zM747 341h14v2h-14zM761 340h14v2h-14zM775 339h13v2h-13zM788 338h14v2h-14zM802 337h16v2h-16zM818 336h15v2h-15zM833 335h15v2h-15zM848 334h16v2h-16zM864 333h15v2h-15zM879 332h16v2h-16zM895 331h15v2h-15zM910 330h16v2h-16zM926 329h15v2h-15zM941 328h16v2h-16zM957 327h16v2h-16zM973 326h16v2h-16zM989 325h16v2h-16zM1005 324h16v2h-16zM1021 323h17v2h-17zM1038 322h16v2h-16zM1054 321h16v2h-16zM1070 320h16v2h-16zM1086 319h16v2h-16zM1102 318h16v2h-16zM1118 317h15v2h-15zM1133 316h16v2h-16zM1149 315h15v2h-15zM1164 314h16v2h-16zM1180 313h15v2h-15zM1195 312h16v2h-16zM1211 311h7v2h-7zM33 512h19v2h-19zM52 511h18v2h-18zM70 510h18v2h-18zM88 509h18v2h-18zM106 508h18v2h-18zM124 507h18v2h-18zM142 506h19v2h-19zM161 505h18v2h-18zM179 504h18v2h-18zM197 503h18v2h-18zM215 502h19v2h-19zM234 501h18v2h-18zM252 500h19v2h-19zM271 499h18v2h-18zM289 498h19v2h-19zM308 497h18v2h-18zM326 496h19v2h-19zM345 495h17v2h-17zM362 494h17v2h-17zM379 493h16v2h-16zM395 492h16v2h-16zM411 491h17v2h-17zM428 490h16v2h-16zM444 489h17v2h-17zM461 488h16v2h-16zM477 487h17v2h-17zM494 486h16v2h-16zM510 485h16v2h-16zM526 484h16v2h-16zM542 483h15v2h-15zM557 482h16v2h-16zM573 481h16v2h-16zM589 480h16v2h-16zM605 479h15v2h-15zM620 478h16v2h-16zM636 477h16v2h-16zM652 476h14v2h-14zM666 475h13v2h-13zM679 474h14v2h-14zM693 473h13v2h-13zM706 472h14v2h-14zM720 471h14v2h-14zM734 470h13v2h-13zM747 469h14v2h-14zM761 468h14v2h-14zM775 467h13v2h-13zM788 466h14v2h-14zM802 465h16v2h-16zM818 464h15v2h-15zM833 463h15v2h-15zM848 462h16v2h-16zM864 461h15v2h-15zM879 460h16v2h-16zM895 459h15v2h-15zM910 458h16v2h-16zM926 457h15v2h-15zM941 456h16v2h-16zM957 455h16v2h-16zM973 454h16v2h-16zM989 453h16v2h-16zM1005 452h16v2h-16zM1021 451h17v2h-17zM1038 450h16v2h-16zM1054 449h16v2h-16zM1070 448h16v2h-16zM1086 447h16v2h-16zM1102 446h16v2h-16zM1118 445h15v2h-15zM1133 444h16v2h-16zM1149 443h15v2h-15zM1164 442h16v2h-16zM1180 441h15v2h-15zM1195 440h16v2h-16zM1211 439h7v2h-7zM33 641h13v2h-13zM46 640h18v2h-18zM64 639h19v2h-19zM83 638h18v2h-18zM101 637h18v2h-18zM119 636h18v2h-18zM137 635h18v2h-18zM155 634h18v2h-18zM173 633h18v2h-18zM191 632h19v2h-19zM210 631h18v2h-18zM228 630h19v2h-19zM247 629h18v2h-18zM265 628h19v2h-19zM284 627h18v2h-18zM302 626h19v2h-19zM321 625h18v2h-18zM339 624h18v2h-18zM357 623h17v2h-17zM374 622h16v2h-16zM390 621h17v2h-17zM407 620h16v2h-16zM423 619h17v2h-17zM440 618h16v2h-16zM456 617h16v2h-16zM472 616h17v2h-17zM489 615h16v2h-16zM505 614h16v2h-16zM521 613h16v2h-16zM537 612h16v2h-16zM553 611h15v2h-15zM568 610h16v2h-16zM584 609h16v2h-16zM600 608h16v2h-16zM616 607h16v2h-16zM632 606h15v2h-15zM647 605h14v2h-14zM661 604h14v2h-14zM675 603h14v2h-14zM689 602h13v2h-13zM702 601h14v2h-14zM716 600h14v2h-14zM730 599h13v2h-13zM743 598h14v2h-14zM757 597h13v2h-13zM770 596h14v2h-14zM784 595h14v2h-14zM798 594h15v2h-15zM813 593h15v2h-15zM828 592h16v2h-16zM844 591h15v2h-15zM859 590h16v2h-16zM875 589h15v2h-15zM890 588h16v2h-16zM906 587h15v2h-15zM921 586h16v2h-16zM937 585h15v2h-15zM952 584h16v2h-16zM968 583h16v2h-16zM984 582h17v2h-17zM1001 581h16v2h-16zM1017 580h16v2h-16zM1033 579h16v2h-16zM1049 578h16v2h-16zM1065 577h16v2h-16zM1081 576h16v2h-16zM1097 575h16v2h-16zM1113 574h15v2h-15zM1128 573h16v2h-16zM1144 572h16v2h-16zM1160 571h15v2h-15zM1175 570h16v2h-16zM1191 569h15v2h-15zM1206 568h12v2h-12zM725 728h14v1h-14zM739 727h14v2h-14zM753 726h13v2h-13zM766 725h14v2h-14zM780 724h14v2h-14zM794 723h14v2h-14zM808 722h16v2h-16zM824 721h15v2h-15zM839 720h16v2h-16zM855 719h15v2h-15zM870 718h16v2h-16zM886 717h15v2h-15zM901 716h15v2h-15zM916 715h16v2h-16zM932 714h15v2h-15zM947 713h16v2h-16zM963 712h17v2h-17zM980 711h16v2h-16zM996 710h16v2h-16zM1012 709h16v2h-16zM1028 708h16v2h-16zM1044 707h16v2h-16zM1060 706h16v2h-16zM1076 705h16v2h-16zM1092 704h16v2h-16zM1108 703h16v2h-16zM1124 702h15v2h-15zM1139 701h16v2h-16zM1155 700h15v2h-15zM1170 699h16v2h-16zM1186 698h15v2h-15zM1201 697h16v2h-16zM1217 696h1v2h-1z" fill="#ff0000"/>
<path d="M33 192h2v1h-2zM35 191h19v1h-19zM54 190h19v1h-19zM73 189h19v1h-19zM92 188h18v1h-18zM110 187h19v1h-19zM129 186h19v1h-19zM148 185h19v1h-19zM167 184h18v1h-18zM185 183h19v1h-19zM204 182h19v1h-19zM223 181h19v1h-19zM242 180h19v1h-19zM261 179h19v1h-19zM280 178h19v1h-19zM299 177h19v1h-19zM318 176h19v1h-19zM337 175h19v1h-19zM356 174h16v1h-16zM372 173h17v1h-17zM389 172h17v1h-17zM406 171h17v1h-17zM423 170h17v1h-17zM440 169h17v1h-17zM457 168h17v1h-17zM474 167h16v1h-16zM490 166h16v1h-16zM506 165h14v1h-14zM520 164h14v1h-14zM534 163h15v1h-15zM549 162h14v1h-14zM563 161h14v1h-14zM577 160h14v1h-14zM591 159h14v1h-14zM605 158h14v1h-14zM619 157h15v1h-15zM634 156h14v1h-14zM648 155h14v1h-14zM662 154h14v1h-14zM676 153h14v1h-14zM690 152h14v1h-14zM704 151h14v1h-14zM718 150h15v1h-15zM733 149h14v1h-14zM747 148h14v1h-14zM761 147h14v1h-14zM775 146h14v1h-14zM789 145h15v1h-15zM804 144h17v1h-17zM821 143h17v1h-17zM838 142h16v1h-16zM854 141h17v1h-17zM871 140h17v1h-17zM888 139h17v1h-17zM905 138h17v1h-17zM922 137h17v1h-17zM939 136h16v1h-16zM955 135h14v1h-14zM969 134h13v1h-13zM982 133h14v1h-14zM996 132h14v1h-14zM1010 131h14v1h-14zM1024 130h14v1h-14zM1038 129h14v1h-14zM1052 128h14v1h-14zM1066 127h14v1h-14zM1080 126h14v1h-14zM1094 125h15v1h-15zM1109 124h17v1h-17zM1126 123h17v1h-17zM1143 122h17v1h-17zM1160 121h17v1h-17zM1177 120h18v1h-18zM1195 119h17v1h-17zM1212 118h6v1h-6zM33 320h16v1h-16zM49 319h18v1h-18zM67 318h19v1h-19zM86 317h19v1h-19zM105 316h19v1h-19zM124 315h18v1h-18zM142 314h19v1h-19zM161 313h19v1h-19zM180 312h19v1h-19zM199 311h19v1h-19zM218 310h19v1h-19zM237 309h19v1h-19zM256 308h19v1h-19zM275 307h19v1h-19zM294 306h19v1h-19zM313 305h19v1h-19zM332 304h19v1h-19zM351 303h16v1h-16zM367 302h17v1h-17zM384 301h17v1h-17zM401 300h17v1h-17zM418 299h17v1h-17zM435 298h17v1h-17zM452 297h16v1h-16zM468 296h17v1h-17zM485 295h17v1h-17zM502 294h14v1h-14zM516 293h14v1h-14zM530 292h14v1h-14zM544 291h15v1h-15zM559 290h14v1h-14zM573 289h14v1h-14zM587 288h14v1h-14zM601 287h14v1h-14zM615 286h14v1h-14zM629 285h14v1h-14zM643 284h15v1h-15zM658 283h14v1h-14zM672 282h14v1h-14zM686 281h14v1h-14zM700 280h14v1h-14zM714 279h14v1h-14zM728 278h14v1h-14zM742 277h15v1h-15zM757 276h14v1h-14zM771 275h14v1h-14zM785 274h14v1h-14zM799 273h17v1h-17zM816 272h17v1h-17zM833 271h16v1h-16zM849 270h17v1h-17zM866 269h17v1h-17zM883 268h17v1h-17zM900 267h17v1h-17zM917 266h17v1h-17zM934 265h16v1h-16zM950 264h14v1h-14zM964 263h14v1h-14zM978 262h14v1h-14zM992 261h14v1h-14zM1006 260h14v1h-14zM1020 259h14v1h-14zM1034 258h14v1h-14zM1048 257h14v1h-14zM1062 256h14v1h-14zM1076 255h13v1h-13zM1089 254h15v1h-15zM1104 253h17v1h-17zM1121 252h17v1h-17zM1138 251h17v1h-17zM1155 250h17v1h-17zM1172 249h17v1h-17zM1189 248h18v1h-18zM1207 247h11v1h-11zM33 449h10v1h-10zM43 448h19v1h-19zM62 447h18v1h-18zM80 446h19v1h-19zM99 445h19v1h-19zM118 444h19v1h-19zM137 443h18v1h-18zM155 442h19v1h-19zM174 441h19v1h-19zM193 440h19v1h-19zM212 439h19v1h-19zM231 438h19v1h-19zM250 437h19v1h-19zM269 436h19v1h-19zM288 435h19v1h-19zM307 434h19v1h-19zM326 433h19v1h-19zM345 432h17v1h-17zM362 431h17v1h-17zM379 430h17v1h-17zM396 429h17v1h-17zM413 428h17v1h-17zM430 427h17v1h-17zM447 426h16v1h-16zM463 425h17v1h-17zM480 424h17v1h-17zM497 423h15v1h-15zM512 422h14v1h-14zM526 421h14v1h-14zM540 420h14v1h-14zM554 419h14v1h-14zM568 418h15v1h-15zM583 417h14v1h-14zM597 416h14v1h-14zM611 415h14v1h-14zM625 414h14v1h-14zM639 413h14v1h-14zM653 412h14v1h-14zM667 411h15v1h-15zM682 410h14v1h-14zM696 409h14v1h-14zM710 408h14v1h-14zM724 407h14v1h-14zM738 406h14v1h-14zM752 405h15v1h-15zM767 404h14v1h-14zM781 403h14v1h-14zM795 402h16v1h-16zM811 401h16v1h-16zM827 400h17v1h-17zM844 399h17v1h-17zM861 398h17v1h-17zM878 397h17v1h-17zM895 396h17v1h-17zM912 395h17v1h-17zM929 394h16v1h-16zM945 393h15v1h-15zM960 392h14v1h-14zM974 391h14v1h-14zM988 390h14v1h-14zM1002 389h14v1h-14zM1016 388h14v1h-14zM1030 387h14v1h-14zM1044 386h13v1h-13zM1057 385h14v1h-14zM1071 384h14v1h-14zM1085 383h14v1h-14zM1099 382h17v1h-17zM1116 381h17v1h-17zM1133 380h17v1h-17zM1150 379h17v1h-17zM1167 378h17v1h-17zM1184 377h17v1h-17zM1201 376h17v1h-17zM33 578h4v1h-4zM37 577h19v1h-19zM56 576h19v1h-19zM75 575h19v1h-19zM94 574h18v1h-18zM112 573h19v1h-19zM131 572h19v1h-19zM150 571h19v1h-19zM169 570h18v1h-18zM187 569h19v1h-19zM206 568h19v1h-19zM225 567h19v1h-19zM244 566h19v1h-19zM263 565h19v1h-19zM282 564h19v1h-19zM301 563h19v1h-19zM320 562h19v1h-19zM339 561h18v1h-18zM357 560h17v1h-17zM374 559h17v1h-17zM391 558h17v1h-17zM408 557h17v1h-17zM425 556h17v1h-17zM442 555h16v1h-16zM458 554h17v1h-17zM475 553h17v1h-17zM492 552h16v1h-16zM508 551h14v1h-14zM522 550h14v1h-14zM536 549h14v1h-14zM550 548h14v1h-14zM564 547h14v1h-14zM578 546h14v1h-14zM592 545h15v1h-15zM607 544h14v1h-14zM621 543h14v1h-14zM635 542h14v1h-14zM649 541h14v1h-14zM663 540h14v1h-14zM677 539h15v1h-15zM692 538h14v1h-14zM706 537h14v1h-14zM720 536h14v1h-14zM734 535h14v1h-14zM748 534h14v1h-14zM762 533h14v1h-14zM776 532h15v1h-15zM791 531h15v1h-15zM806 530h16v1h-16zM822 529h17v1h-17zM839 528h17v1h-17zM856 527h17v1h-17zM873 526h17v1h-17zM890 525h17v1h-17zM907 524h17v1h-17zM924 523h16v1h-16zM940 522h16v1h-16zM956 521h14v1h-14zM970 520h14v1h-14zM984 519h14v1h-14zM998 518h14v1h-14zM1012 517h13v1h-13zM1025 516h14v1h-14zM1039 515h14v1h-14zM1053 514h14v1h-14zM1067 513h14v1h-14zM1081 512h14v1h-14zM1095 511h16v1h-16zM1111 510h17v1h-17zM1128 509h17v1h-17zM1145 508h17v1h-17zM1162 507h17v1h-17zM1179 506h17v1h-17zM1196 505h17v1h-17zM1213 504h5v1h-5zM33 706h17v1h-17zM50 705h19v1h-19zM69 704h19v1h-19zM88 703h19v1h-19zM107 702h18v1h-18zM125 701h19v1h-19zM144 700h19v1h-19zM163 699h19v1h-19zM182 698h19v1h-19zM201 697h18v1h-18zM219 696h19v1h-19zM238 695h19v1h-19zM257 694h19v1h-19zM276 693h19v1h-19zM295 692h19v1h-19zM314 691h19v1h-19zM333 690h19v1h-19zM352 689h17v1h-17zM369 688h17v1h-17zM386 687h17v1h-17zM403 686h17v1h-17zM420 685h16v1h-16zM436 684h17v1h-17zM453 683h17v1h-17zM470 682h17v1h-17zM487 681h16v1h-16zM503 680h14v1h-14zM517 679h15v1h-15zM532 678h14v1h-14zM546 677h14v1h-14zM560 676h14v1h-14zM574 675h14v1h-14zM588 674h14v1h-14zM602 673h15v1h-15zM617 672h14v1h-14zM631 671h14v1h-14zM645 670h14v1h-14zM659 669h14v1h-14zM673 668h14v1h-14zM687 667h14v1h-14zM701 666h15v1h-15zM716 665h14v1h-14zM730 664h14v1h-14zM744 663h14v1h-14zM758 662h14v1h-14zM772 661h14v1h-14zM786 660h15v1h-15zM801 659h16v1h-16zM817 658h17v1h-17zM834 657h17v1h-17zM851 656h17v1h-17zM868 655h17v1h-17zM885 654h17v1h-17zM902 653h16v1h-16zM918 652h17v1h-17zM935 651h17v1h-17zM952 650h14v1h-14zM966 649h14v1h-14zM980 648h14v1h-14zM994 647h13v1h-13zM1007 646h14v1h-14zM1021 645h14v1h-14zM1035 644h14v1h-14zM1049 643h14v1h-14zM1063 642h14v1h-14zM1077 641h14v1h-14zM1091 640h15v1h-15zM1106 639h17v1h-17zM1123 638h17v1h-17zM1140 637h17v1h-17zM1157 636h17v1h-17zM1174 635h17v1h-17zM1191 634h17v1h-17zM1208 633h10v1h-10z" fill="#ff0000"/>
</g>
<text x="44" y="136.5" font-size="11" fill="#ff0000" textLength="154" lengthAdjust="spacingAndGlyphs" >[005] Mars Price Line G 180 N -1</text>
<text x="43" y="147" font-size="11" fill="#f0ac6c" textLength="164" lengthAdjust="spacingAndGlyphs" >[006] Jupiter Price Line G 180 N -1</text>
<g shape-rendering="crispEdges">
<path d="M33 164h1v14h-1zM31 173h2v1h-2zM34 164h2v1h-2zM39 146h1v11h-1zM37 154h2v1h-2zM40 147h2v1h-2zM45 141h1v15h-1zM43 143h2v1h-2zM46 154h2v1h-2zM51 141h1v28h-1zM49 163h2v1h-2zM52 145h2v1h-2zM57 136h1v13h-1zM55 144h2v1h-2zM58 138h2v1h-2zM63 134h1v23h-1zM61 151h2v1h-2zM64 137h2v1h-2zM69 103h1v21h-1zM75 103h1v16h-1zM76 105h2v1h-2zM81 103h1v14h-1zM79 111h2v1h-2zM82 113h2v1h-2zM87 109h1v13h-1zM85 114h2v1h-2zM88 120h2v1h-2zM93 103h1v19h-1zM91 119h2v1h-2zM94 104h2v1h-2zM99 103h1v18h-1zM100 120h2v1h-2zM105 110h1v33h-1zM103 125h2v1h-2zM106 140h2v1h-2zM111 134h1v22h-1zM109 135h2v1h-2zM112 143h2v1h-2zM117 138h1v11h-1zM115 141h2v1h-2zM118 144h2v1h-2zM123 124h1v27h-1zM121 150h2v1h-2zM124 132h2v1h-2zM129 131h1v11h-1zM127 138h2v1h-2zM130 141h2v1h-2zM135 132h1v20h-1zM133 142h2v1h-2zM136 138h2v1h-2zM141 138h1v13h-1zM139 142h2v1h-2zM142 147h2v1h-2zM147 152h1v24h-1zM145 155h2v1h-2zM148 175h2v1h-2zM153 170h1v10h-1zM151 172h2v1h-2zM154 170h2v1h-2zM159 168h1v12h-1zM157 176h2v1h-2zM160 168h2v1h-2zM165 150h1v19h-1zM163 168h2v1h-2zM166 151h2v1h-2zM171 150h1v14h-1zM169 154h2v1h-2zM172 160h2v1h-2zM177 164h1v10h-1zM175 168h2v1h-2zM178 173h2v1h-2zM183 169h1v21h-1zM181 172h2v1h-2zM184 184h2v1h-2zM189 163h1v31h-1zM187 183h2v1h-2zM190 163h2v1h-2zM195 152h1v13h-1zM193 163h2v1h-2zM196 154h2v1h-2zM201 154h1v11h-1zM199 162h2v1h-2zM202 159h2v1h-2zM207 133h1v34h-1zM205 164h2v1h-2zM208 135h2v1h-2zM213 136h1v12h-1zM211 143h2v1h-2zM214 140h2v1h-2zM219 139h1v13h-1zM217 144h2v1h-2zM220 147h2v1h-2zM225 163h1v33h-1zM223 168h2v1h-2zM226 191h2v1h-2zM231 163h1v16h-1zM229 173h2v1h-2zM232 178h2v1h-2zM237 165h1v18h-1zM235 180h2v1h-2zM238 180h2v1h-2zM243 182h1v30h-1zM241 188h2v1h-2zM244 198h2v1h-2zM249 200h1v16h-1zM247 203h2v1h-2zM250 211h2v1h-2zM255 198h1v13h-1zM253 204h2v1h-2zM256 205h2v1h-2zM261 220h1v31h-1zM259 225h2v1h-2zM262 242h2v1h-2zM267 245h1v26h-1zM265 253h2v1h-2zM268 264h2v1h-2zM273 250h1v30h-1zM271 255h2v1h-2zM274 275h2v1h-2zM279 249h1v32h-1zM277 277h2v1h-2zM280 252h2v1h-2zM285 202h1v33h-1zM283 232h2v1h-2zM286 209h2v1h-2zM291 203h1v12h-1zM289 211h2v1h-2zM292 214h2v1h-2zM297 219h1v16h-1zM295 222h2v1h-2zM298 227h2v1h-2zM303 219h1v10h-1zM301 225h2v1h-2zM304 228h2v1h-2zM309 200h1v30h-1zM307 229h2v1h-2zM310 200h2v1h-2zM315 191h1v23h-1zM313 209h2v1h-2zM316 197h2v1h-2zM321 200h1v47h-1zM319 204h2v1h-2zM322 246h2v1h-2zM327 224h1v42h-1zM325 263h2v1h-2zM328 224h2v1h-2zM333 198h1v33h-1zM331 226h2v1h-2zM334 211h2v1h-2zM339 202h1v41h-1zM337 214h2v1h-2zM340 237h2v1h-2zM345 230h1v23h-1zM343 236h2v1h-2zM346 237h2v1h-2zM351 261h1v34h-1zM349 268h2v1h-2zM352 294h2v1h-2zM357 269h1v37h-1zM355 282h2v1h-2zM358 292h2v1h-2zM363 280h1v54h-1zM361 323h2v1h-2zM364 292h2v1h-2zM369 284h1v21h-1zM367 291h2v1h-2zM370 298h2v1h-2zM375 334h1v45h-1zM373 343h2v1h-2zM376 370h2v1h-2zM381 337h1v27h-1zM379 345h2v1h-2zM382 357h2v1h-2zM387 311h1v26h-1zM385 313h2v1h-2zM388 333h2v1h-2zM393 329h1v53h-1zM391 332h2v1h-2zM394 378h2v1h-2zM399 366h1v46h-1zM397 397h2v1h-2zM400 402h2v1h-2zM405 374h1v98h-1zM403 384h2v1h-2zM406 444h2v1h-2zM411 418h1v36h-1zM409 426h2v1h-2zM412 443h2v1h-2zM417 408h1v35h-1zM415 433h2v1h-2zM418 427h2v1h-2zM423 432h1v52h-1zM421 446h2v1h-2zM424 480h2v1h-2zM429 469h1v60h-1zM427 477h2v1h-2zM430 509h2v1h-2zM435 521h1v31h-1zM433 534h2v1h-2zM436 525h2v1h-2zM441 505h1v56h-1zM439 544h2v1h-2zM442 518h2v1h-2zM447 493h1v26h-1zM445 507h2v1h-2zM448 499h2v1h-2zM453 451h1v34h-1zM451 481h2v1h-2zM454 451h2v1h-2zM459 429h1v32h-1zM457 432h2v1h-2zM460 445h2v1h-2zM465 423h1v37h-1zM463 452h2v1h-2zM466 429h2v1h-2zM471 416h1v27h-1zM469 428h2v1h-2zM472 438h2v1h-2zM477 399h1v41h-1zM475 432h2v1h-2zM478 399h2v1h-2zM483 401h1v23h-1zM481 401h2v1h-2zM484 423h2v1h-2zM489 423h1v28h-1zM487 446h2v1h-2zM490 447h2v1h-2zM495 424h1v32h-1zM493 446h2v1h-2zM496 429h2v1h-2zM501 408h1v19h-1zM499 422h2v1h-2zM502 421h2v1h-2zM507 427h1v63h-1zM505 432h2v1h-2zM508 489h2v1h-2zM513 474h1v36h-1zM511 492h2v1h-2zM514 490h2v1h-2zM519 469h1v22h-1zM517 471h2v1h-2zM520 482h2v1h-2zM525 472h1v35h-1zM523 482h2v1h-2zM526 506h2v1h-2zM531 502h1v28h-1zM529 506h2v1h-2zM532 519h2v1h-2zM537 507h1v24h-1zM535 516h2v1h-2zM538 515h2v1h-2zM543 529h1v22h-1zM541 550h2v1h-2zM544 544h2v1h-2zM549 522h1v25h-1zM547 534h2v1h-2zM550 531h2v1h-2zM555 468h1v58h-1zM553 517h2v1h-2zM556 468h2v1h-2zM561 458h1v21h-1zM559 468h2v1h-2zM562 467h2v1h-2zM567 449h1v24h-1zM565 470h2v1h-2zM568 460h2v1h-2zM573 439h1v27h-1zM571 448h2v1h-2zM574 454h2v1h-2zM579 451h1v28h-1zM577 454h2v1h-2zM580 475h2v1h-2zM585 469h1v26h-1zM583 472h2v1h-2zM586 494h2v1h-2zM591 463h1v52h-1zM589 507h2v1h-2zM592 463h2v1h-2zM597 462h1v30h-1zM595 466h2v1h-2zM598 478h2v1h-2zM603 447h1v37h-1zM601 475h2v1h-2zM604 453h2v1h-2zM609 452h1v23h-1zM607 458h2v1h-2zM610 466h2v1h-2zM615 433h1v13h-1zM613 439h2v1h-2zM616 440h2v1h-2zM621 427h1v19h-1zM619 444h2v1h-2zM622 431h2v1h-2zM627 423h1v25h-1zM625 430h2v1h-2zM628 447h2v1h-2zM633 429h1v24h-1zM631 441h2v1h-2zM634 434h2v1h-2zM639 446h1v16h-1zM637 457h2v1h-2zM640 452h2v1h-2zM645 440h1v15h-1zM643 440h2v1h-2zM646 447h2v1h-2zM651 425h1v25h-1zM649 449h2v1h-2zM652 427h2v1h-2zM657 426h1v24h-1zM655 429h2v1h-2zM658 443h2v1h-2zM663 436h1v20h-1zM661 439h2v1h-2zM664 443h2v1h-2zM669 431h1v22h-1zM667 447h2v1h-2zM670 441h2v1h-2zM675 440h1v24h-1zM673 442h2v1h-2zM676 461h2v1h-2zM681 458h1v9h-1zM679 459h2v1h-2zM682 463h2v1h-2zM687 447h1v18h-1zM685 463h2v1h-2zM688 455h2v1h-2zM693 443h1v12h-1zM691 454h2v1h-2zM694 448h2v1h-2zM699 441h1v19h-1zM697 441h2v1h-2zM700 450h2v1h-2zM705 415h1v21h-1zM703 434h2v1h-2zM706 415h2v1h-2zM711 395h1v22h-1zM709 416h2v1h-2zM712 405h2v1h-2zM717 399h1v14h-1zM715 406h2v1h-2zM718 412h2v1h-2zM723 406h1v15h-1zM721 419h2v1h-2zM724 415h2v1h-2zM729 408h1v28h-1zM727 414h2v1h-2zM730 435h2v1h-2zM735 431h1v16h-1zM733 436h2v1h-2zM736 446h2v1h-2zM741 448h1v17h-1zM739 450h2v1h-2zM742 448h2v1h-2zM747 445h1v43h-1zM745 447h2v1h-2zM748 487h2v1h-2zM753 479h1v21h-1zM751 487h2v1h-2zM754 495h2v1h-2zM759 475h1v17h-1zM757 482h2v1h-2zM760 482h2v1h-2zM765 474h1v40h-1zM763 478h2v1h-2zM766 510h2v1h-2zM771 498h1v24h-1zM769 509h2v1h-2zM772 508h2v1h-2zM777 487h1v44h-1zM775 518h2v1h-2zM778 491h2v1h-2zM783 484h1v45h-1zM781 487h2v1h-2zM784 524h2v1h-2zM789 519h1v23h-1zM787 522h2v1h-2zM790 519h2v1h-2zM795 490h1v39h-1zM793 525h2v1h-2zM796 490h2v1h-2zM801 486h1v34h-1zM799 490h2v1h-2zM802 519h2v1h-2zM807 490h1v21h-1zM805 510h2v1h-2zM808 502h2v1h-2zM813 499h1v28h-1zM811 501h2v1h-2zM814 514h2v1h-2zM819 506h1v20h-1zM817 515h2v1h-2zM820 521h2v1h-2zM825 525h1v22h-1zM823 527h2v1h-2zM826 539h2v1h-2zM831 533h1v40h-1zM829 536h2v1h-2zM832 568h2v1h-2zM837 557h1v20h-1zM835 561h2v1h-2zM838 560h2v1h-2zM843 544h1v28h-1zM841 568h2v1h-2zM844 559h2v1h-2zM849 538h1v22h-1zM847 552h2v1h-2zM850 541h2v1h-2zM855 525h1v32h-1zM853 542h2v1h-2zM856 527h2v1h-2zM861 515h1v22h-1zM859 530h2v1h-2zM862 524h2v1h-2zM867 528h1v23h-1zM865 541h2v1h-2zM868 550h2v1h-2zM873 545h1v28h-1zM871 546h2v1h-2zM874 568h2v1h-2zM879 554h1v14h-1zM877 560h2v1h-2zM880 559h2v1h-2zM885 560h1v24h-1zM883 563h2v1h-2zM886 582h2v1h-2zM891 587h1v41h-1zM889 587h2v1h-2zM892 627h2v1h-2zM897 605h1v39h-1zM895 622h2v1h-2zM898 619h2v1h-2zM903 590h1v26h-1zM901 611h2v1h-2zM904 595h2v1h-2zM909 577h1v45h-1zM907 608h2v1h-2zM910 591h2v1h-2zM915 572h1v35h-1zM913 581h2v1h-2zM916 606h2v1h-2zM921 596h1v32h-1zM919 619h2v1h-2zM922 602h2v1h-2zM927 582h1v35h-1zM925 591h2v1h-2zM928 616h2v1h-2zM933 588h1v30h-1zM931 613h2v1h-2zM934 588h2v1h-2zM939 579h1v28h-1zM937 595h2v1h-2zM940 593h2v1h-2zM945 587h1v25h-1zM943 609h2v1h-2zM946 593h2v1h-2zM951 580h1v19h-1zM949 594h2v1h-2zM952 586h2v1h-2zM957 560h1v22h-1zM955 580h2v1h-2zM958 565h2v1h-2zM963 561h1v13h-1zM961 565h2v1h-2zM964 569h2v1h-2zM969 554h1v26h-1zM967 577h2v1h-2zM970 558h2v1h-2zM975 556h1v21h-1zM973 556h2v1h-2zM976 568h2v1h-2zM981 550h1v18h-1zM979 565h2v1h-2zM982 557h2v1h-2zM987 541h1v15h-1zM985 553h2v1h-2zM988 549h2v1h-2zM993 549h1v15h-1zM991 552h2v1h-2zM994 553h2v1h-2zM999 533h1v22h-1zM997 541h2v1h-2zM1000 554h2v1h-2zM1005 541h1v12h-1zM1003 551h2v1h-2zM1006 547h2v1h-2zM1011 543h1v17h-1zM1009 544h2v1h-2zM1012 555h2v1h-2zM1017 556h1v21h-1zM1015 556h2v1h-2zM1018 576h2v1h-2zM1023 556h1v19h-1zM1021 574h2v1h-2zM1024 559h2v1h-2zM1029 556h1v9h-1zM1027 562h2v1h-2zM1030 556h2v1h-2zM1035 532h1v15h-1zM1033 546h2v1h-2zM1036 536h2v1h-2zM1041 524h1v14h-1zM1039 525h2v1h-2zM1042 537h2v1h-2zM1047 505h1v34h-1zM1045 537h2v1h-2zM1048 507h2v1h-2zM1053 500h1v15h-1zM1051 506h2v1h-2zM1054 514h2v1h-2zM1059 510h1v24h-1zM1057 511h2v1h-2zM1060 529h2v1h-2zM1065 535h1v18h-1zM1063 539h2v1h-2zM1066 552h2v1h-2zM1071 535h1v16h-1zM1069 550h2v1h-2zM1072 544h2v1h-2zM1077 538h1v24h-1zM1075 545h2v1h-2zM1078 543h2v1h-2zM1083 504h1v25h-1zM1081 526h2v1h-2zM1084 504h2v1h-2zM1089 477h1v32h-1zM1087 506h2v1h-2zM1090 487h2v1h-2zM1095 469h1v28h-1zM1093 486h2v1h-2zM1096 488h2v1h-2zM1101 487h1v12h-1zM1099 488h2v1h-2zM1102 495h2v1h-2zM1107 465h1v41h-1zM1105 502h2v1h-2zM1108 468h2v1h-2zM1113 449h1v28h-1zM1111 462h2v1h-2zM1114 449h2v1h-2z" fill="#ffff00"/>
<rect x="1118" y="727" width="4" height="5" fill="#ffff00" />
<rect x="1209" y="411" width="9" height="13" fill="#fff" stroke="#008000" stroke-width="1" transform="translate(.5 .5)"/>
</g>
<circle cx="1213.5" cy="417.5" r="3" fill="none" stroke="#000" stroke-width="1.4"/>
<text x="34" y="715" font-size="10" fill="#fff" textLength="159" lengthAdjust="spacingAndGlyphs" >FIBONACCI/GALACTIC TRADER(TM)</text>
<clipPath id="dc"><rect x="29" y="730" width="1190" height="17"/></clipPath><g clip-path="url(#dc)">
<text x="54" y="743" font-size="11" fill="#fff" >2008-07-28</text>
<text x="138" y="743" font-size="11" fill="#fff" >2008-08-18</text>
<text x="228" y="743" font-size="11" fill="#fff" >2008-09-08</text>
<text x="318" y="743" font-size="11" fill="#fff" >2008-09-29</text>
<text x="408" y="743" font-size="11" fill="#fff" >2008-10-20</text>
<text x="498" y="743" font-size="11" fill="#fff" >2008-11-10</text>
<text x="582" y="743" font-size="11" fill="#fff" >2008-12-01</text>
<text x="672" y="743" font-size="11" fill="#fff" >2008-12-22</text>
<text x="732" y="743" font-size="11" fill="#fff" >2009-01-12</text>
<text x="822" y="743" font-size="11" fill="#fff" >2009-02-02</text>
<text x="912" y="743" font-size="11" fill="#fff" >2009-02-23</text>
<text x="1002" y="743" font-size="11" fill="#fff" >2009-03-16</text>
<text x="1092" y="743" font-size="11" fill="#fff" >2009-04-06</text>
<text x="1182" y="743" font-size="11" fill="#fff" >2009-04-27</text>
</g>
<clipPath id="pc"><rect x="1219" y="103" width="32" height="644"/></clipPath><g clip-path="url(#pc)">
<text x="1230" y="160" font-size="11" fill="#fff" >2600</text>
<text x="1230" y="232" font-size="11" fill="#fff" >2400</text>
<text x="1230" y="303" font-size="11" fill="#fff" >2200</text>
<text x="1230" y="375" font-size="11" fill="#fff" >2000</text>
<text x="1230" y="446" font-size="11" fill="#fff" >1800</text>
<text x="1230" y="518" font-size="11" fill="#fff" >1600</text>
<text x="1230" y="589" font-size="11" fill="#fff" >1400</text>
<text x="1230" y="661" font-size="11" fill="#fff" >1200</text>
<text x="1230" y="733" font-size="11" fill="#fff" >1000</text>
</g>
<rect x="1220" y="442" width="31" height="14" fill="#fff" />
<text x="1224.5" y="453" font-size="11" fill="#000" >1782</text>
<rect x="1234" y="733" width="16" height="14" fill="#c0c0c0" />
<rect x="1234" y="733" width="16" height="1" fill="#fff" />
<rect x="1234" y="733" width="1" height="14" fill="#fff" />
<rect x="1249" y="733" width="1" height="14" fill="#606060" />
<rect x="1234" y="746" width="16" height="1" fill="#606060" />
<text x="1236.5" y="744" font-size="10" fill="#000" textLength="11" lengthAdjust="spacingAndGlyphs" >TF</text>
<g shape-rendering="crispEdges">
<rect x="14" y="51" width="18" height="18" fill="#c0c0c0"/>
<rect x="38" y="51" width="18" height="18" fill="#c0c0c0"/>
<path d="M15.5 52.5h6l3 3v9h-9z" fill="#fff" stroke="#000" stroke-width="1" />
<path d="M21.5 52.5v3h3" fill="none" stroke="#000" stroke-width="1" />
<path d="M38.5 53.5h6l2 2v10h-8z" fill="#fff" stroke="#000" stroke-width="1" />
<rect x="40" y="56" width="3" height="1" fill="#0000ff"/>
<rect x="40" y="59" width="2" height="1" fill="#ff0000"/>
<rect x="43" y="59" width="2" height="1" fill="#0000ff"/>
<rect x="40" y="62" width="3" height="1" fill="#0000ff"/>
<path d="M46 57h6v-2l4 3-4 3v-2h-6z" fill="#ff0000" stroke="none" stroke-width="1" />
<path d="M56 62h-6v-2l-4 3 4 3v-2h6z" fill="#0000ff" stroke="none" stroke-width="1" />
<rect x="46" y="59" width="9" height="1" fill="#fff"/>
<rect x="63" y="54" width="1" height="8" fill="#000080"/><rect x="62" y="57" width="1" height="1" fill="#000080"/><rect x="66" y="52" width="1" height="9" fill="#000080"/><rect x="65" y="55" width="1" height="1" fill="#000080"/><rect x="67" y="58" width="1" height="1" fill="#000080"/><rect x="68" y="57" width="1" height="9" fill="#000080"/><rect x="69" y="61" width="1" height="1" fill="#000080"/><rect x="71" y="54" width="1" height="6" fill="#000080"/><rect x="72" y="54" width="1" height="1" fill="#000080"/><rect x="74" y="53" width="1" height="6" fill="#000080"/><rect x="75" y="53" width="2" height="1" fill="#000080"/>
<rect x="87" y="53" width="1" height="8" fill="#000080"/><rect x="86" y="56" width="1" height="1" fill="#000080"/><rect x="90" y="51" width="1" height="9" fill="#000080"/><rect x="89" y="54" width="1" height="1" fill="#000080"/><rect x="91" y="57" width="1" height="1" fill="#000080"/><rect x="92" y="56" width="1" height="9" fill="#000080"/><rect x="93" y="60" width="1" height="1" fill="#000080"/><rect x="95" y="53" width="1" height="6" fill="#000080"/><rect x="96" y="53" width="1" height="1" fill="#000080"/><rect x="98" y="52" width="1" height="6" fill="#000080"/><rect x="99" y="52" width="2" height="1" fill="#000080"/>
<rect x="136" y="53" width="15" height="14" fill="#000"/>
<rect x="137" y="54" width="6" height="5" fill="#ffff66"/>
<rect x="144" y="54" width="6" height="5" fill="#ffff66"/>
<rect x="137" y="60" width="6" height="6" fill="#ffff66"/>
<rect x="144" y="60" width="6" height="6" fill="#ffff66"/>
<rect x="139" y="55" width="1" height="3" fill="#fff"/>
<rect x="141" y="56" width="1" height="3" fill="#fff"/>
<rect x="145" y="55" width="1" height="3" fill="#fff"/>
<rect x="147" y="56" width="1" height="3" fill="#fff"/>
<rect x="139" y="61" width="1" height="3" fill="#fff"/>
<rect x="141" y="60" width="1" height="4" fill="#fff"/>
<rect x="145" y="61" width="1" height="4" fill="#fff"/>
<rect x="147" y="60" width="1" height="3" fill="#fff"/>
<rect x="137" y="65" width="13" height="1" fill="#808080"/>
<rect x="163" y="51" width="2" height="9" fill="#000"/>
<path d="M159 55h4v5z" fill="#000" stroke="none" stroke-width="1" />
<rect x="168" y="52" width="2" height="9" fill="#ff0000"/>
<rect x="170" y="52" width="3" height="2" fill="#ff0000"/>
<rect x="172" y="54" width="1" height="2" fill="#ff0000"/>
<rect x="189" y="51" width="2" height="9" fill="#000"/>
<path d="M185 55h4v5z" fill="#000" stroke="none" stroke-width="1" />
<rect x="194" y="52" width="2" height="9" fill="#ff0000"/>
<rect x="196" y="52" width="3" height="2" fill="#ff0000"/>
<rect x="198" y="54" width="1" height="2" fill="#ff0000"/>
<rect x="207" y="64" width="5" height="1" fill="#000"/><rect x="208" y="65" width="3" height="1" fill="#000"/><rect x="209" y="66" width="1" height="1" fill="#000"/>
<rect x="240" y="52" width="8" height="7" fill="#000"/><rect x="241" y="53" width="6" height="5" fill="#ff0000"/>
<rect x="238" y="54" width="8" height="7" fill="#000"/><rect x="239" y="55" width="6" height="5" fill="#00ff00"/>
<rect x="236" y="57" width="8" height="7" fill="#000"/><rect x="237" y="58" width="6" height="5" fill="#00ffff"/>
<rect x="233" y="60" width="8" height="7" fill="#000"/><rect x="234" y="61" width="6" height="5" fill="#ffff00"/>
<rect x="260" y="52" width="8" height="7" fill="#000"/><rect x="261" y="53" width="6" height="5" fill="#00ff00"/>
<rect x="258" y="55" width="8" height="7" fill="#000"/><rect x="259" y="56" width="6" height="5" fill="#00ffff"/>
<rect x="256" y="58" width="8" height="7" fill="#000"/><rect x="257" y="59" width="6" height="5" fill="#ffff00"/>
<rect x="265" y="62" width="8" height="2" fill="#000"/>
<rect x="268" y="59" width="2" height="8" fill="#000"/>
<rect x="286" y="53" width="1" height="14" fill="#0000ff"/>
<rect x="289" y="53" width="1" height="14" fill="#0000ff"/>
<rect x="290" y="55" width="1" height="1" fill="#0000ff"/>
<rect x="285" y="63" width="1" height="1" fill="#0000ff"/>
<rect x="279" y="59" width="7" height="1" fill="#000"/>
<rect x="290" y="59" width="7" height="1" fill="#000"/>
<rect x="305" y="53" width="1" height="14" fill="#0000ff"/>
<rect x="318" y="53" width="1" height="14" fill="#0000ff"/>
<rect x="304" y="54" width="1" height="1" fill="#0000ff"/>
<rect x="319" y="64" width="1" height="1" fill="#0000ff"/>
<rect x="307" y="59" width="10" height="1" fill="#000"/>
<rect x="334" y="53" width="3" height="14" fill="#0000ff"/>
<rect x="332" y="54" width="2" height="2" fill="#0000ff"/>
<rect x="337" y="63" width="2" height="2" fill="#0000ff"/>
<rect x="328" y="59" width="6" height="1" fill="#000"/>
<rect x="337" y="59" width="7" height="1" fill="#000"/>
<rect x="359" y="53" width="1" height="14" fill="#0000ff"/>
<rect x="360" y="55" width="1" height="1" fill="#0000ff"/>
<rect x="358" y="63" width="1" height="1" fill="#0000ff"/>
<rect x="352" y="59" width="7" height="1" fill="#000"/>
<rect x="360" y="59" width="7" height="1" fill="#000"/>
<rect x="434" y="52" width="9" height="16" fill="#000"/>
<rect x="431" y="53" width="15" height="2" fill="#000"/>
<rect x="432" y="58" width="13" height="2" fill="#000"/>
<rect x="433" y="62" width="11" height="2" fill="#000"/>
<rect x="464" y="53" width="9" height="5" fill="#fff"/>
<rect x="464" y="53" width="9" height="1" fill="#000"/>
<rect x="463" y="54" width="1" height="4" fill="#000"/>
<rect x="473" y="54" width="1" height="4" fill="#000"/>
<rect x="460" y="58" width="16" height="6" fill="#c0c0c0"/>
<rect x="460" y="58" width="16" height="1" fill="#000"/>
<rect x="460" y="63" width="16" height="1" fill="#000"/>
<rect x="460" y="58" width="1" height="6" fill="#000"/>
<rect x="476" y="58" width="1" height="6" fill="#000"/>
<rect x="462" y="64" width="13" height="3" fill="#fff"/>
<rect x="462" y="66" width="13" height="1" fill="#000"/>
<rect x="461" y="61" width="15" height="1" fill="#808080"/>
<rect x="465" y="55" width="7" height="1" fill="#808080"/>
<rect x="484" y="53" width="11" height="12" fill="#fff"/>
<rect x="484" y="53" width="11" height="3" fill="#000080"/>
<rect x="484" y="53" width="1" height="12" fill="#000"/>
<rect x="484" y="64" width="6" height="1" fill="#000"/>
<rect x="490" y="55" width="11" height="13" fill="#fff"/>
<rect x="490" y="55" width="11" height="3" fill="#000080"/>
<rect x="490" y="55" width="1" height="13" fill="#000"/>
<rect x="500" y="55" width="1" height="13" fill="#000"/>
<rect x="490" y="67" width="11" height="1" fill="#000"/>
<rect x="486" y="52" width="1" height="2" fill="#000"/>
<rect x="492" y="52" width="1" height="2" fill="#000"/>
<rect x="497" y="54" width="1" height="2" fill="#000"/>
<rect x="486" y="58" width="3" height="1" fill="#800000"/>
<rect x="486" y="60" width="3" height="1" fill="#800000"/>
<rect x="486" y="62" width="3" height="1" fill="#800000"/>
<path d="M539.5 53.5h13v13h-6v-8h-7z" fill="#ffff33" stroke="#000" stroke-width="1" />
<rect x="541" y="56" width="1" height="1" fill="#fff"/>
<rect x="544" y="56" width="1" height="1" fill="#fff"/>
<rect x="547" y="56" width="1" height="1" fill="#fff"/>
<rect x="550" y="57" width="1" height="1" fill="#fff"/>
<rect x="548" y="61" width="1" height="1" fill="#fff"/>
<rect x="550" y="64" width="1" height="1" fill="#fff"/>
<rect x="542" y="54" width="1" height="2" fill="#000"/>
<rect x="545" y="54" width="1" height="2" fill="#000"/>
<rect x="548" y="54" width="1" height="2" fill="#000"/>
<rect x="547" y="60" width="2" height="1" fill="#000"/>
<rect x="547" y="63" width="2" height="1" fill="#000"/>
<rect x="564" y="52" width="1" height="15" fill="#000080"/>
<rect x="562" y="64" width="2" height="1" fill="#000080"/>
<rect x="565" y="53" width="2" height="1" fill="#000080"/>
<rect x="569" y="53" width="1" height="15" fill="#ff0000"/>
<rect x="567" y="56" width="5" height="7" fill="#ff0000"/>
<rect x="568" y="57" width="3" height="5" fill="#c0c0c0"/>
<rect x="574" y="52" width="4" height="10" fill="#000"/>
<rect x="575" y="62" width="2" height="1" fill="#000"/>
<rect x="586" y="64" width="5" height="1" fill="#000"/><rect x="587" y="65" width="3" height="1" fill="#000"/><rect x="588" y="66" width="1" height="1" fill="#000"/>
<path d="M610.5 55.5h9v13h-9z" fill="none" stroke="#0000ff" stroke-width="1" />
<path d="M619.5 51.5h9v14h-9z" fill="#f0f0f0" stroke="#0000ff" stroke-width="1" />
<rect x="612" y="58" width="1" height="7" fill="#000"/>
<rect x="614" y="56" width="1" height="6" fill="#000"/>
<rect x="616" y="59" width="1" height="8" fill="#000"/>
<rect x="618" y="61" width="1" height="5" fill="#000"/>
<rect x="622" y="54" width="1" height="7" fill="#000"/>
<rect x="624" y="56" width="1" height="5" fill="#000"/>
<rect x="626" y="52" width="1" height="7" fill="#000"/>
<path d="M635.5 55.5h9v13h-9z" fill="none" stroke="#800080" stroke-width="1" />
<path d="M644.5 51.5h9v14h-9z" fill="#f0f0f0" stroke="#800080" stroke-width="1" />
<rect x="637" y="57" width="1" height="7" fill="#000"/>
<rect x="639" y="56" width="1" height="8" fill="#000"/>
<rect x="641" y="59" width="1" height="6" fill="#000"/>
<rect x="647" y="54" width="1" height="7" fill="#000"/>
<rect x="649" y="56" width="1" height="5" fill="#000"/>
<rect x="651" y="52" width="1" height="7" fill="#000"/>
<rect x="636" y="62" width="8" height="1" fill="#0000ff"/>
<rect x="636" y="66" width="8" height="1" fill="#0000ff"/>
<rect x="645" y="57" width="8" height="1" fill="#0000ff"/>
<rect x="645" y="61" width="8" height="1" fill="#0000ff"/>
<rect x="643" y="56" width="1" height="11" fill="#0000ff"/>
<rect x="648" y="52" width="1" height="13" fill="#0000ff"/>
<rect x="663" y="55" width="15" height="2" fill="#ff0000"/>
<rect x="667" y="52" width="2" height="1" fill="#ff0000"/>
<rect x="671" y="52" width="2" height="1" fill="#ff0000"/>
<rect x="675" y="52" width="2" height="1" fill="#ff0000"/>
<rect x="667" y="60" width="2" height="1" fill="#ff0000"/>
<rect x="671" y="60" width="2" height="1" fill="#ff0000"/>
<rect x="675" y="60" width="2" height="1" fill="#ff0000"/>
<rect x="673" y="51" width="2" height="13" fill="#ffff00"/>
<rect x="659" y="63" width="10" height="2" fill="#008000"/>
<rect x="660" y="59" width="2" height="1" fill="#008000"/>
<rect x="664" y="59" width="2" height="1" fill="#008000"/>
<rect x="660" y="67" width="2" height="1" fill="#008000"/>
<rect x="664" y="67" width="2" height="1" fill="#008000"/>
<rect x="668" y="67" width="2" height="1" fill="#008000"/>
<rect x="662" y="58" width="2" height="10" fill="#ffff00"/>
<rect x="663" y="55" width="15" height="2" fill="#ff0000"/>
<rect x="659" y="63" width="10" height="2" fill="#008000"/>
<rect x="693" y="56" width="2" height="12" fill="#ffff00"/>
<rect x="695" y="60" width="2" height="2" fill="#ffff00"/>
<rect x="694" y="55" width="15" height="2" fill="#ff0000"/>
<rect x="698" y="52" width="2" height="2" fill="#ff0000"/>
<rect x="698" y="59" width="2" height="2" fill="#ff0000"/>
<rect x="702" y="52" width="2" height="2" fill="#ff0000"/>
<rect x="702" y="59" width="2" height="2" fill="#ff0000"/>
<rect x="706" y="52" width="2" height="2" fill="#ff0000"/>
<rect x="706" y="59" width="2" height="2" fill="#ff0000"/>
<rect x="749" y="56" width="2" height="12" fill="#ffff00"/>
<rect x="751" y="60" width="2" height="2" fill="#ffff00"/>
<rect x="750" y="55" width="15" height="2" fill="#000080"/>
<rect x="754" y="52" width="2" height="2" fill="#000080"/>
<rect x="754" y="59" width="2" height="2" fill="#000080"/>
<rect x="758" y="52" width="2" height="2" fill="#000080"/>
<rect x="758" y="59" width="2" height="2" fill="#000080"/>
<rect x="762" y="52" width="2" height="2" fill="#000080"/>
<rect x="762" y="59" width="2" height="2" fill="#000080"/>
<rect x="885" y="65" width="5" height="1" fill="#000"/><rect x="886" y="66" width="3" height="1" fill="#000"/><rect x="887" y="67" width="1" height="1" fill="#000"/>
</g>
<circle cx="438.5" cy="55" r="1.8" fill="#ff0000"/><circle cx="438.5" cy="59.5" r="1.8" fill="#ffff00"/><circle cx="438.5" cy="64" r="1.8" fill="#00ff00"/>
<path d="M282 56.5l3 3-3 3" fill="none" stroke="#000" stroke-width="1.3" />
<path d="M294 56.5l-3 3 3 3" fill="none" stroke="#000" stroke-width="1.3" />
<path d="M355 56.5l3 3-3 3" fill="none" stroke="#000" stroke-width="1.3" />
<path d="M364 56.5l-3 3 3 3" fill="none" stroke="#000" stroke-width="1.3" />
<path d="M310 56.5l-3 3 3 3M314 56.5l3 3-3 3" fill="none" stroke="#000" stroke-width="1.3" />
<path d="M331 56.5l-3 3 3 3M341 56.5l3 3-3 3" fill="none" stroke="#000" stroke-width="1.3" />
<text x="25" y="56.5" font-size="7" fill="#0000ff" textLength="6" lengthAdjust="spacingAndGlyphs" font-weight="bold">N</text>
<text x="25" y="62.5" font-size="7" fill="#0000ff" textLength="6" lengthAdjust="spacingAndGlyphs" font-weight="bold">E</text>
<text x="25" y="68.5" font-size="7" fill="#0000ff" textLength="6" lengthAdjust="spacingAndGlyphs" font-weight="bold">W</text>
<text x="71.5" y="68" font-size="13" fill="#800000" textLength="8" lengthAdjust="spacingAndGlyphs" font-weight="bold">n</text>
<text x="96" y="67.5" font-size="13" fill="#800080" textLength="8" lengthAdjust="spacingAndGlyphs" font-weight="bold">v</text>
<text x="111" y="62.5" font-size="14" fill="#008000" textLength="15" lengthAdjust="spacingAndGlyphs" font-weight="bold">pg</text>
<text x="157.5" y="68.5" font-size="8.5" fill="#0000ff" textLength="19" lengthAdjust="spacingAndGlyphs" font-family='"DejaVu Sans", sans-serif'>SYM</text>
<text x="183" y="68.5" font-size="8" fill="#0000ff" textLength="16" lengthAdjust="spacingAndGlyphs" font-family='"DejaVu Sans", sans-serif'>TIME</text>
<text x="384" y="67.5" font-size="19" fill="#0000ff" textLength="9" lengthAdjust="spacingAndGlyphs" font-weight="bold" font-style="italic" font-family='"Liberation Serif", serif'>i</text>
<text x="392" y="59" font-size="11" fill="#0000ff" textLength="6" lengthAdjust="spacingAndGlyphs" font-weight="bold">*</text>
<text x="405.5" y="67" font-size="19" fill="#0000ff" textLength="16" lengthAdjust="spacingAndGlyphs" font-weight="bold" font-style="italic" font-family='"Liberation Serif", serif'>T</text>
<text x="493.5" y="66" font-size="9" fill="#a00000" textLength="5" lengthAdjust="spacingAndGlyphs" font-weight="bold">7</text>
<text x="510" y="66.5" font-size="20" fill="#0000ff" textLength="12.5" lengthAdjust="spacingAndGlyphs" font-weight="bold">$</text>
<text x="716" y="58.5" font-size="8.5" fill="#000080" textLength="18" lengthAdjust="spacingAndGlyphs" font-weight="bold" font-family='"DejaVu Sans", sans-serif'>Live</text>
<text x="716" y="67.5" font-size="8.5" fill="#000080" textLength="18" lengthAdjust="spacingAndGlyphs" font-weight="bold" font-family='"DejaVu Sans", sans-serif'>Rng</text>
<text x="772" y="58.5" font-size="8.5" fill="#000080" textLength="18" lengthAdjust="spacingAndGlyphs" font-weight="bold" font-family='"DejaVu Sans", sans-serif'>Live</text>
<text x="772" y="67.5" font-size="8.5" fill="#000080" textLength="18" lengthAdjust="spacingAndGlyphs" font-weight="bold" font-family='"DejaVu Sans", sans-serif'>Rng</text>
<text x="804.5" y="58.8" font-size="10.5" fill="#ff0000" textLength="14.5" lengthAdjust="spacingAndGlyphs">HP</text>
<text x="804.5" y="68.8" font-size="12" fill="#0000ff" textLength="14.5" lengthAdjust="spacingAndGlyphs" font-weight="bold">FZ</text>
<text x="827.5" y="61" font-size="12" fill="#ff00ff" textLength="7" lengthAdjust="spacingAndGlyphs" font-weight="bold">F</text>
<text x="835" y="68.5" font-size="12" fill="#ff00ff" textLength="6.5" lengthAdjust="spacingAndGlyphs" font-weight="bold">h</text>
<text x="840" y="58" font-size="9" fill="#ff00ff" textLength="5.5" lengthAdjust="spacingAndGlyphs" font-weight="bold">z</text>
<text x="859.5" y="65.5" font-size="14" fill="#000" textLength="16.5" lengthAdjust="spacingAndGlyphs" font-weight="bold" font-family='"DejaVu Sans Mono", monospace'>JZ</text>
<path d="M14 86c3-6 6-6 9 0s5 6 9 4" fill="none" stroke="#ff00ff" stroke-width="1.2" />
<path d="M14 92c4-6 7-6 10 0s5 5 8 4" fill="none" stroke="#ff00ff" stroke-width="1.2" />
<line x1="14" y1="86" x2="28" y2="80.5" stroke="#0000ff" stroke-width="1.2"/>
<line x1="14" y1="94" x2="32" y2="86.5" stroke="#0000ff" stroke-width="1.2"/>
<circle cx="48" cy="84" r="4.2" fill="#ffff00"/>
<rect x="52" y="88" width="2" height="2" fill="#ff00ff"/>
<circle cx="56" cy="91.5" r="2" fill="#0000ff"/>
<path d="M59 93l1.5 2-1.5 2-1.5-2z" fill="#ff0000" stroke="none" stroke-width="1" />
<circle cx="72" cy="84" r="4.2" fill="#ffff00"/>
<rect x="77" y="88" width="2" height="2" fill="#ff00ff"/>
<circle cx="81" cy="91.5" r="2" fill="#0000ff"/>
<path d="M84 93l1.5 2-1.5 2-1.5-2z" fill="#ff0000" stroke="none" stroke-width="1" />
<text x="68.5" y="97.5" font-size="11" fill="#000" textLength="7.5" lengthAdjust="spacingAndGlyphs" font-family='"DejaVu Sans Mono", monospace'>R</text>
<circle cx="107" cy="88.5" r="7.5" fill="#fff" stroke="#000" stroke-width="1.2"/><circle cx="107" cy="88.5" r="5.6" fill="none" stroke="#0000ff" stroke-width="1.2"/><circle cx="107" cy="88.5" r="3.7" fill="none" stroke="#ff0000" stroke-width="1.2"/><circle cx="107" cy="88.5" r="1.6" fill="#fff" stroke="#ff00ff" stroke-width="1.2"/>
<circle cx="131" cy="88.5" r="8.3" fill="#f0f0f0" stroke="#000" stroke-width="1.2"/><circle cx="127.5" cy="85.5" r="2.6" fill="#0000ff"/><circle cx="131" cy="94" r="2.2" fill="#ff0000"/><path d="M131 87.5v4M129 89.5h4" stroke="#ff00ff" stroke-width="1.2"/>
<path d="M147 87c4-8 8-8 11-1s3 6 5 5" fill="none" stroke="#ff00ff" stroke-width="1.2" />
<line x1="147" y1="89" x2="162" y2="81.5" stroke="#0000ff" stroke-width="1.2"/>
<path d="M147 92q8-3 16-2" fill="none" stroke="#808080" stroke-width="1.2" />
<path d="M147 95l3 2M155 96l8-6" fill="none" stroke="#ff0000" stroke-width="1.2" stroke-dasharray="3 2"/>
<path d="M170 85c3-6 6-6 9 0s2 12 9 11M171 92l6-5M180 91q4 2 8 0" fill="none" stroke="#ff00ff" stroke-width="1.2" />
<text x="174.5" y="95" font-size="14" fill="#000" textLength="8.5" lengthAdjust="spacingAndGlyphs" font-weight="bold">P</text>
<g shape-rendering="crispEdges">
<rect x="200" y="80" width="17" height="17" fill="#fff"/>
<rect x="202" y="81" width="14" height="1" fill="#000"/>
<rect x="202" y="81" width="1" height="15" fill="#000"/>
<rect x="202" y="96" width="15" height="1" fill="#000"/>
<rect x="216" y="81" width="1" height="16" fill="#000"/>
<rect x="206" y="83" width="1" height="1" fill="#00e0ff"/>
<rect x="208" y="83" width="1" height="1" fill="#00e0ff"/>
<rect x="210" y="83" width="1" height="1" fill="#00e0ff"/>
<rect x="212" y="83" width="1" height="1" fill="#00e0ff"/>
<rect x="214" y="83" width="1" height="1" fill="#00e0ff"/>
<rect x="204" y="83" width="1" height="1" fill="#ff0000"/>
<rect x="206" y="85" width="1" height="1" fill="#00e0ff"/>
<rect x="208" y="85" width="1" height="1" fill="#00e0ff"/>
<rect x="210" y="85" width="1" height="1" fill="#00e0ff"/>
<rect x="212" y="85" width="1" height="1" fill="#00e0ff"/>
<rect x="214" y="85" width="1" height="1" fill="#00e0ff"/>
<rect x="204" y="85" width="1" height="1" fill="#ff0000"/>
<rect x="206" y="87" width="1" height="1" fill="#00e0ff"/>
<rect x="208" y="87" width="1" height="1" fill="#00e0ff"/>
<rect x="210" y="87" width="1" height="1" fill="#00e0ff"/>
<rect x="212" y="87" width="1" height="1" fill="#00e0ff"/>
<rect x="214" y="87" width="1" height="1" fill="#00e0ff"/>
<rect x="204" y="87" width="1" height="1" fill="#ff0000"/>
<rect x="206" y="89" width="1" height="1" fill="#00e0ff"/>
<rect x="208" y="89" width="1" height="1" fill="#00e0ff"/>
<rect x="210" y="89" width="1" height="1" fill="#00e0ff"/>
<rect x="212" y="89" width="1" height="1" fill="#00e0ff"/>
<rect x="214" y="89" width="1" height="1" fill="#00e0ff"/>
<rect x="204" y="89" width="1" height="1" fill="#ff0000"/>
<rect x="206" y="91" width="1" height="1" fill="#00e0ff"/>
<rect x="208" y="91" width="1" height="1" fill="#00e0ff"/>
<rect x="210" y="91" width="1" height="1" fill="#00e0ff"/>
<rect x="212" y="91" width="1" height="1" fill="#00e0ff"/>
<rect x="214" y="91" width="1" height="1" fill="#00e0ff"/>
<rect x="204" y="91" width="1" height="1" fill="#ff0000"/>
<rect x="206" y="93" width="1" height="1" fill="#00e0ff"/>
<rect x="208" y="93" width="1" height="1" fill="#00e0ff"/>
<rect x="210" y="93" width="1" height="1" fill="#00e0ff"/>
<rect x="212" y="93" width="1" height="1" fill="#00e0ff"/>
<rect x="214" y="93" width="1" height="1" fill="#00e0ff"/>
<rect x="204" y="93" width="1" height="1" fill="#ff0000"/>
<rect x="206" y="95" width="1" height="1" fill="#00e0ff"/>
<rect x="208" y="95" width="1" height="1" fill="#00e0ff"/>
<rect x="210" y="95" width="1" height="1" fill="#00e0ff"/>
<rect x="212" y="95" width="1" height="1" fill="#00e0ff"/>
<rect x="214" y="95" width="1" height="1" fill="#00e0ff"/>
<rect x="204" y="95" width="1" height="1" fill="#ff0000"/>
<rect x="225" y="94" width="5" height="1" fill="#000"/><rect x="226" y="95" width="3" height="1" fill="#000"/><rect x="227" y="96" width="1" height="1" fill="#000"/>
</g>
<path d="M11 180v11.5l2.8-2.6 2.2 5 2-.9-2.2-4.8h4z" fill="#000" stroke="none" stroke-width="1" />
<g shape-rendering="crispEdges"><rect x="6" y="210" width="18" height="2" fill="#000"/><rect x="14" y="202" width="2" height="18" fill="#000"/></g>
<pattern id="dz" width="2" height="2" patternUnits="userSpaceOnUse"><rect width="1" height="1" fill="#d8d8d8"/><rect x="1" y="1" width="1" height="1" fill="#d8d8d8"/></pattern>
<rect x="4" y="224" width="22" height="22" fill="url(#dz)" shape-rendering="crispEdges"/>
<path d="M21 232.5h-4.5a4 4 0 0 0 0 8H21" fill="none" stroke="#000" stroke-width="4.6" />
<path d="M20.5 232.5h-4a4 4 0 0 0 0 8h4" fill="none" stroke="#ff0000" stroke-width="2.6" />
<g shape-rendering="crispEdges"><rect x="18" y="231" width="3" height="3" fill="#fff"/><rect x="18" y="239" width="3" height="3" fill="#fff"/></g>
<g shape-rendering="crispEdges">
<rect x="7" y="262" width="9" height="11" fill="#fff"/>
<rect x="7" y="262" width="9" height="1" fill="#000"/>
<rect x="7" y="262" width="1" height="11" fill="#000"/>
<rect x="7" y="272" width="9" height="1" fill="#000"/>
<rect x="15" y="267" width="1" height="6" fill="#000"/>
<rect x="9" y="267" width="4" height="4" fill="#c0c0c0"/>
</g>
<circle cx="14.5" cy="263.5" r="4.6" fill="#e8e8e8" fill-opacity="0.75" stroke="#000" stroke-width="1.2"/>
<line x1="18" y1="267" x2="22.5" y2="272" stroke="#000" stroke-width="2"/>
<g shape-rendering="crispEdges"><rect x="11" y="262" width="4" height="1" fill="#00e0e0"/><rect x="10" y="263" width="2" height="1" fill="#00e0e0"/><rect x="11" y="264" width="4" height="1" fill="#00e0e0"/></g>
<g shape-rendering="crispEdges">
<rect x="7" y="286" width="9" height="11" fill="#f0f0f0"/>
<rect x="7" y="286" width="9" height="1" fill="#a0a0a0"/>
<rect x="7" y="286" width="1" height="11" fill="#a0a0a0"/>
<rect x="7" y="296" width="9" height="1" fill="#a0a0a0"/>
<rect x="15" y="291" width="1" height="6" fill="#a0a0a0"/>
<rect x="9" y="291" width="4" height="4" fill="#a0a0a0"/>
</g>
<circle cx="14.5" cy="287.5" r="4.6" fill="#a0a0a0" fill-opacity="1" stroke="#a0a0a0" stroke-width="1.2"/>
<line x1="18" y1="291" x2="22.5" y2="296" stroke="#a0a0a0" stroke-width="2"/>
<g shape-rendering="crispEdges"><rect x="11" y="287" width="1" height="2" fill="#f0f0f0"/><rect x="13" y="289" width="1" height="1" fill="#f0f0f0"/><rect x="10" y="292" width="5" height="5" fill="#a0a0a0"/></g>
<line x1="8" y1="312.5" x2="22" y2="312.5" stroke="#000" stroke-width="1.6"/><path d="M8 313l12 13" fill="none" stroke="#000" stroke-width="3.4" /><path d="M10 316l9.5 9.5" fill="none" stroke="#00e000" stroke-width="1.8" /><circle cx="8.8" cy="313.6" r="1" fill="#fff"/>
<line x1="8" y1="336.5" x2="22" y2="336.5" stroke="#000" stroke-width="1.6"/><path d="M8 337l12 13" fill="none" stroke="#000" stroke-width="3.4" /><path d="M10 340l9.5 9.5" fill="none" stroke="#0000ff" stroke-width="1.8" /><circle cx="8.8" cy="337.6" r="1" fill="#fff"/>
<line x1="8" y1="359.5" x2="8" y2="375" stroke="#000" stroke-width="1.8"/>
<path d="M8 360l13 13.5" fill="none" stroke="#000" stroke-width="3.4" />
<path d="M10.5 363.5l9.5 9" fill="none" stroke="#0000ff" stroke-width="1.8" />
<circle cx="9.3" cy="361.2" r="1" fill="#fff"/>
<line x1="6" y1="396" x2="19" y2="382.5" stroke="#000" stroke-width="1.3"/>
<g shape-rendering="crispEdges"><rect x="17" y="388" width="5" height="11" fill="#000"/><rect x="18" y="390" width="3" height="8" fill="#00ffff"/><rect x="18" y="384" width="3" height="4" fill="#000"/><rect x="19" y="385" width="1" height="5" fill="#ffff00"/><rect x="18" y="382" width="2" height="2" fill="#000"/></g>
<text x="6.5" y="425" font-size="12" fill="#000" textLength="18" lengthAdjust="spacingAndGlyphs" font-family='"Liberation Serif", serif'>abc</text>
<text x="6.5" y="448" font-size="12" fill="#000" textLength="18" lengthAdjust="spacingAndGlyphs" font-family='"Liberation Serif", serif'>abc</text>
<path d="M8.5 437.5l14 14.5M22.5 437.5l-14 14.5" fill="none" stroke="#ff0000" stroke-width="1.3" />
<text stroke="#0000ff" stroke-width=".5" x="11.5" y="474" font-size="14" fill="#0000ff" textLength="8.5" lengthAdjust="spacingAndGlyphs">F</text>
<circle cx="15" cy="499" r="7.2" fill="none" stroke="#000" stroke-width="1.8"/>
<ellipse cx="15" cy="523.5" rx="8.2" ry="5.8" fill="none" stroke="#000" stroke-width="1.8"/>
<path d="M7 538v6l-3.5-3z" fill="#000" stroke="none" stroke-width="1" />
<text x="1256.5" y="133" font-size="15" fill="#000" textLength="12" lengthAdjust="spacingAndGlyphs" font-weight="bold" font-family='"DejaVu Sans Mono", monospace'>A</text>
<line x1="1262" y1="119.5" x2="1275" y2="127" stroke="#ff0000" stroke-width="1.6"/>
<line x1="1257.5" y1="141.5" x2="1275" y2="158.5" stroke="#000" stroke-width="1.4"/>
<line x1="1259" y1="141.5" x2="1275" y2="148.5" stroke="#ff0000" stroke-width="1.6"/>
<line x1="1257.5" y1="142" x2="1266" y2="158.5" stroke="#00e000" stroke-width="1.6"/>
<path d="M1257.5 169a8.5 9.5 0 0 0 17 0" fill="none" stroke="#000" stroke-width="1.2" />
<path d="M1259.5 169a6.5 7.5 0 0 0 13 0" fill="none" stroke="#ff00ff" stroke-width="1.2" />
<path d="M1261.5 169a4.5 5 0 0 0 9 0" fill="none" stroke="#00e000" stroke-width="1.2" />
<line x1="1257" y1="180" x2="1267" y2="169" stroke="#000" stroke-width="1"/>
<text x="1258.5" y="203" font-size="13" fill="#000080" textLength="15.5" lengthAdjust="spacingAndGlyphs" font-weight="bold">DL</text>
<line x1="1258.5" y1="229.5" x2="1275" y2="213.5" stroke="#000" stroke-width="1.2"/>
<line x1="1270.5" y1="230.5" x2="1275" y2="226" stroke="#000" stroke-width="1.2"/>
<line x1="1257.5" y1="221" x2="1269" y2="231" stroke="#808080" stroke-width="1.2"/>
<line x1="1257.5" y1="221" x2="1264.5" y2="213.5" stroke="#000" stroke-width="1.2"/>
<text x="1256.5" y="250" font-size="15" fill="#000" textLength="5" lengthAdjust="spacingAndGlyphs" font-weight="bold" font-family='"Liberation Serif", serif'>I</text>
<g shape-rendering="crispEdges"><rect x="1264" y="245" width="11" height="1" fill="#ff0000"/><rect x="1267" y="249" width="8" height="1" fill="#0000ff"/><rect x="1271" y="252" width="4" height="1" fill="#008000"/></g>
<line x1="1262" y1="244" x2="1273" y2="253.5" stroke="#000" stroke-width="1.3"/>
<g shape-rendering="crispEdges">
<rect x="1258" y="263" width="16" height="1" fill="#000"/>
<rect x="1258" y="265" width="16" height="1" fill="#000"/>
<rect x="1258" y="269" width="16" height="1" fill="#000"/>
<rect x="1258" y="276" width="16" height="1" fill="#000"/>
<rect x="1258" y="287" width="1" height="14" fill="#0000ff"/>
<rect x="1261" y="287" width="1" height="14" fill="#0000ff"/>
<rect x="1263" y="287" width="1" height="14" fill="#0000ff"/>
<rect x="1267" y="287" width="1" height="14" fill="#0000ff"/>
<rect x="1272" y="287" width="1" height="14" fill="#0000ff"/>
<rect x="1258" y="311" width="1" height="14" fill="#ff0000"/>
<rect x="1263" y="311" width="1" height="14" fill="#ff0000"/>
<rect x="1268" y="311" width="1" height="14" fill="#ff0000"/>
<rect x="1273" y="311" width="1" height="14" fill="#ff0000"/>
<rect x="1257" y="344" width="1" height="6" fill="#0000ff"/>
<rect x="1258" y="346" width="1" height="1" fill="#0000ff"/>
<rect x="1256" y="348" width="1" height="1" fill="#0000ff"/>
<rect x="1260" y="341" width="1" height="6" fill="#0000ff"/>
<rect x="1261" y="343" width="1" height="1" fill="#0000ff"/>
<rect x="1259" y="345" width="1" height="1" fill="#0000ff"/>
<rect x="1263" y="338" width="1" height="6" fill="#0000ff"/>
<rect x="1264" y="340" width="1" height="1" fill="#0000ff"/>
<rect x="1262" y="342" width="1" height="1" fill="#0000ff"/>
<rect x="1266" y="335" width="1" height="6" fill="#0000ff"/>
<rect x="1267" y="337" width="1" height="1" fill="#0000ff"/>
<rect x="1265" y="339" width="1" height="1" fill="#0000ff"/>
<rect x="1268" y="333" width="7" height="4" fill="#ff0000"/>
<rect x="1269" y="334" width="5" height="2" fill="#fff"/>
<rect x="1270" y="334" width="1" height="1" fill="#000"/>
<rect x="1272" y="335" width="1" height="1" fill="#000"/>
<rect x="1272" y="339" width="4" height="4" fill="#ff0000"/>
<rect x="1273" y="340" width="2" height="2" fill="#000"/>
</g>
<line x1="1261" y1="364" x2="1268" y2="357" stroke="#000" stroke-width="1.2"/>
<line x1="1260" y1="373" x2="1274" y2="359" stroke="#000" stroke-width="1.2"/>
<line x1="1269" y1="372" x2="1275" y2="366" stroke="#000" stroke-width="1.2"/>
<line x1="1259" y1="395.5" x2="1268" y2="383" stroke="#0000ff" stroke-width="1.3"/>
<line x1="1268" y1="395.5" x2="1274" y2="385" stroke="#000" stroke-width="1.3"/>
<path d="M1259 395.5h9M1267.5 384v11" fill="none" stroke="#c00000" stroke-width="1.2" stroke-dasharray="1 1.5"/>
<g shape-rendering="crispEdges"><rect x="1257" y="407" width="18" height="1" fill="#0000ff"/><rect x="1257" y="411" width="18" height="1" fill="#ff0000"/><rect x="1257" y="415" width="18" height="1" fill="#0000ff"/><rect x="1257" y="419" width="18" height="1" fill="#ff0000"/></g>
<text x="1260.5" y="420" font-size="15" fill="#008000" textLength="11" lengthAdjust="spacingAndGlyphs" font-weight="bold">G</text>
<line x1="1260" y1="443.5" x2="1264" y2="431" stroke="#000" stroke-width="1.1"/>
<line x1="1260" y1="443.5" x2="1268.5" y2="431" stroke="#000" stroke-width="1.1"/>
<line x1="1260" y1="443.5" x2="1273" y2="431" stroke="#000" stroke-width="1.1"/>
<line x1="1260" y1="443.5" x2="1273" y2="437" stroke="#000" stroke-width="1.1"/>
<line x1="1260" y1="443.5" x2="1273" y2="441" stroke="#000" stroke-width="1.1"/>
<path d="M1259 445l3.5-4 1.5 2.5z" fill="#000" stroke="none" stroke-width="1" />
<text x="1257.5" y="467" font-size="14" fill="#800080" textLength="8.5" lengthAdjust="spacingAndGlyphs" font-family='"DejaVu Sans Mono", monospace'>G</text>
<text x="1266.5" y="467" font-size="14" fill="#008000" textLength="8.5" lengthAdjust="spacingAndGlyphs" font-family='"DejaVu Sans Mono", monospace'>9</text>
<text x="1257.5" y="490.5" font-size="14" fill="#800080" textLength="16.5" lengthAdjust="spacingAndGlyphs" font-family='"DejaVu Sans Mono", monospace'>GS</text>
<text x="1258" y="514" font-size="13" fill="#000" textLength="16.5" lengthAdjust="spacingAndGlyphs" font-weight="bold" font-family='"DejaVu Sans Mono", monospace'>LS</text>
<text x="1260.5" y="538.5" font-size="13" fill="#000" textLength="12.5" lengthAdjust="spacingAndGlyphs" font-weight="bold" font-family='"DejaVu Sans", sans-serif'>Bi</text>
<path d="M1258.5 549v6l-3.5-3z" fill="#000" stroke="none" stroke-width="1" />
<g shape-rendering="crispEdges"><rect x="1" y="2" width="9" height="8" fill="#0000ff"/><rect x="2" y="3" width="3" height="1" fill="#fff"/><rect x="4" y="4" width="1" height="2" fill="#fff"/><rect x="2" y="6" width="3" height="1" fill="#fff"/><rect x="6" y="3" width="1" height="3" fill="#fff"/><rect x="6" y="5" width="3" height="1" fill="#fff"/><rect x="8" y="3" width="1" height="5" fill="#fff"/><rect x="2" y="8" width="7" height="1" fill="#fff"/><rect x="11" y="6" width="1" height="8" fill="#000"/><rect x="7" y="12" width="7" height="1" fill="#000"/><rect x="9" y="8" width="1" height="2" fill="#000"/><rect x="8" y="10" width="1" height="2" fill="#000"/><rect x="10" y="6" width="1" height="2" fill="#000"/><rect x="11" y="15" width="1" height="1" fill="#000"/><rect x="12" y="3" width="2" height="2" fill="#00ffff"/><rect x="2" y="14" width="2" height="2" fill="#ff00ff"/><rect x="7" y="16" width="1" height="1" fill="#00ff00"/><rect x="12" y="14" width="1" height="1" fill="#ff0000"/></g>
<g shape-rendering="crispEdges"><rect x="11" y="25" width="16" height="16" fill="#c0c0c0"/><rect x="11" y="40" width="17" height="1" fill="#000"/><rect x="27" y="25" width="1" height="16" fill="#000"/><rect x="11" y="25" width="16" height="1" fill="#e8e8e8"/><rect x="11" y="25" width="1" height="15" fill="#e8e8e8"/><rect x="23" y="28" width="1" height="2" fill="#0000ff"/></g>
<path d="M13 29q3 1 6 7l5-3" fill="none" stroke="#ff0000" stroke-width="1.2" stroke-dasharray="1.5 1"/>
<defs><linearGradient id="cb" x1="0" x2="0" y1="0" y2="1"><stop offset="0" stop-color="#9aa4b2"/><stop offset=".45" stop-color="#5d6a7c"/><stop offset=".5" stop-color="#1f2c40"/><stop offset="1" stop-color="#3a4860"/></linearGradient><linearGradient id="cr" x1="0" x2="0" y1="0" y2="1"><stop offset="0" stop-color="#e0a89c"/><stop offset=".45" stop-color="#cf6a57"/><stop offset=".5" stop-color="#b52a12"/><stop offset="1" stop-color="#d4583a"/></linearGradient></defs>
<path d="M1183.5 -1v12a4 4 0 0 0 4 4h86a4 4 0 0 0 4-4v-12z" fill="url(#cb)" stroke="#c8d0da" stroke-width="1"/>
<path d="M1234.5 -1v15.5h39a3.5 3.5 0 0 0 3.5-3.5v-12z" fill="url(#cr)"/>
<line x1="1209.5" y1="0" x2="1209.5" y2="15" stroke="#c8d0da" stroke-width="1"/>
<line x1="1234.5" y1="0" x2="1234.5" y2="15" stroke="#c8d0da" stroke-width="1"/>
<g shape-rendering="crispEdges"><rect x="1192" y="8" width="10" height="3" fill="#fff"/></g>
<path d="M1216.5 4.5h7v7h-7zM1218.5 2.5h7v7" fill="none" stroke="#fff" stroke-width="1.6" />
<path d="M1219 7h2v2h-2z" fill="#fff" stroke="none" stroke-width="1" />
<path d="M1251.5 3l8 8M1259.5 3l-8 8" fill="none" stroke="#fff" stroke-width="2.6" />
<g shape-rendering="crispEdges"><rect x="1232" y="35" width="6" height="2" fill="#000"/><rect x="1249" y="29" width="6" height="2" fill="#000"/><rect x="1249" y="29" width="1" height="4" fill="#000"/><rect x="1254" y="29" width="1" height="6" fill="#000"/><rect x="1252" y="34" width="3" height="1" fill="#000"/><rect x="1247" y="32" width="6" height="2" fill="#000"/><rect x="1247" y="32" width="1" height="6" fill="#000"/><rect x="1252" y="32" width="1" height="6" fill="#000"/><rect x="1247" y="37" width="6" height="1" fill="#000"/></g>
<path d="M1266.5 29.5l7 7M1273.5 29.5l-7 7" fill="none" stroke="#000" stroke-width="1.7" />
<defs><radialGradient id="orb" cx=".5" cy=".95" r=".95"><stop offset="0" stop-color="#30c0ff"/><stop offset=".35" stop-color="#1878b8"/><stop offset=".7" stop-color="#1d5a88"/><stop offset="1" stop-color="#5d8aa8"/></radialGradient><linearGradient id="orbh" x1="0" x2="0" y1="0" y2="1"><stop offset="0" stop-color="#fff" stop-opacity=".45"/><stop offset="1" stop-color="#fff" stop-opacity=".08"/></linearGradient></defs>
<circle cx="30.5" cy="786.5" r="21.3" fill="#0c1014"/>
<circle cx="30.5" cy="786.5" r="19.6" fill="url(#orb)" stroke="#8fc4e2" stroke-width=".9"/>
<path d="M12.5 783a18 17 0 0 1 36 0q-18 5-36 0z" fill="url(#orbh)"/>
<g transform="translate(30.5 785.5) scale(1.2) translate(-30.5 -784.6)">
<path d="M21.5 775.5q4-2.5 8.5-.8l-1.5 8q-4-1.5-8.5.6z" fill="#e8622a" stroke="none" stroke-width="1" />
<path d="M32 775.300q4.5 1.8 9.5-.5l-1.7 8.200q-4.5 2.2-9.3-.1z" fill="#8cc03c" stroke="none" stroke-width="1" />
<path d="M19.5 785.200q4-2.2 8.6-.5l-1.7 8.300q-4.2-1.7-8.4.6z" fill="#3f9be0" stroke="none" stroke-width="1" />
<path d="M30 785.300q4.5 2 9.3-.2l-1.6 8.200q-4.7 2.3-9.3.1z" fill="#f4c63c" stroke="none" stroke-width="1" />
</g>
<g shape-rendering="crispEdges"><rect x="65" y="779" width="16" height="13" fill="#b8c8e8"/><rect x="66" y="780" width="14" height="11" fill="#2858d8"/><rect x="66" y="788" width="14" height="2" fill="#202020"/><rect x="67" y="787" width="3" height="3" fill="#e05030"/><rect x="66" y="780" width="14" height="4" fill="#3868e0"/><rect x="66" y="790" width="14" height="1" fill="#c8d0e0"/><rect x="88" y="779" width="16" height="13" fill="#a8b8d8"/><rect x="89" y="780" width="14" height="11" fill="#102890"/><rect x="91" y="781" width="6" height="4" fill="#e8f0e8"/><rect x="91" y="781" width="6" height="1" fill="#208060"/><rect x="93" y="784" width="6" height="4" fill="#e8f0e8"/><rect x="93" y="784" width="6" height="1" fill="#208060"/><rect x="95" y="787" width="6" height="3" fill="#e8f0e8"/><rect x="95" y="787" width="6" height="1" fill="#208060"/><rect x="114" y="777" width="11" height="3" fill="#f0a020"/><rect x="113" y="780" width="14" height="9" fill="#e8f0ff"/><rect x="113" y="780" width="14" height="1" fill="#a0c0f0"/><rect x="122" y="781" width="3" height="2" fill="#e05020"/><rect x="116" y="786" width="8" height="6" fill="#2898c8"/><rect x="118" y="787" width="4" height="3" fill="#50c070"/><rect x="113" y="788" width="3" height="2" fill="#a0c8f0"/><rect x="124" y="788" width="3" height="2" fill="#a0c8f0"/><rect x="184" y="778" width="13" height="10" fill="#c8d0e0"/><rect x="185" y="779" width="11" height="8" fill="#1830d0"/><rect x="186" y="780" width="5" height="3" fill="#4060f0"/><rect x="188" y="788" width="5" height="2" fill="#a0a8b0"/><rect x="185" y="790" width="11" height="1" fill="#c8d0d8"/><rect x="182" y="782" width="2" height="9" fill="#808890"/><rect x="204" y="777" width="16" height="16" fill="#1890e8"/><rect x="206" y="779" width="12" height="12" fill="#58b878"/><rect x="228" y="779" width="13" height="13" fill="#b8e0f0"/><rect x="228" y="778" width="13" height="2" fill="#e8f4f8"/><rect x="230" y="782" width="10" height="1" fill="#88c0d8"/><rect x="230" y="785" width="10" height="1" fill="#88c0d8"/><rect x="230" y="788" width="10" height="1" fill="#88c0d8"/><rect x="240" y="780" width="1" height="12" fill="#d8c090"/><rect x="228" y="791" width="13" height="1" fill="#d8c090"/><rect x="255" y="778" width="6" height="6" fill="#f8f8e0"/><rect x="256" y="779" width="4" height="4" fill="#e8d820"/><rect x="257" y="780" width="2" height="2" fill="#000"/><rect x="254" y="784" width="8" height="5" fill="#e8e030"/><rect x="256" y="785" width="4" height="3" fill="#000"/><rect x="253" y="789" width="10" height="2" fill="#202020"/><rect x="253" y="791" width="8" height="1" fill="#e8e8f8"/><rect x="262" y="787" width="2" height="3" fill="#606060"/><rect x="274" y="778" width="8" height="14" fill="#f0d878"/><rect x="279" y="779" width="7" height="13" fill="#e8c858"/><rect x="274" y="778" width="8" height="1" fill="#f8e8a0"/><rect x="285" y="785" width="1" height="4" fill="#60a8d8"/><rect x="279" y="779" width="1" height="13" fill="#d0b048"/><rect x="297" y="778" width="14" height="2" fill="#c8e0f0"/><rect x="298" y="780" width="12" height="12" fill="#a8d0e8"/><rect x="300" y="781" width="8" height="10" fill="#c8e4f4"/><rect x="302" y="783" width="4" height="5" fill="#3890e0"/><rect x="299" y="791" width="10" height="1" fill="#88b8d8"/><rect x="389" y="780" width="14" height="10" fill="#000"/><rect x="391" y="786" width="2" height="1" fill="#00c0c0"/><rect x="394" y="787" width="3" height="1" fill="#00c0c0"/><rect x="399" y="785" width="2" height="1" fill="#00c0c0"/><rect x="401" y="787" width="2" height="1" fill="#ff0000"/></g>
<text x="136.5" y="792" font-size="20" fill="#2a9df4" textLength="13" lengthAdjust="spacingAndGlyphs" font-weight="bold">e</text>
<ellipse cx="143" cy="785.5" rx="8.5" ry="3.2" fill="none" stroke="#f0b428" stroke-width="1.5" transform="rotate(-32 143 785.5)"/>
<circle cx="166" cy="785" r="7.5" fill="#e8741c"/><circle cx="167" cy="784" r="4.4" fill="#2f55c8"/><path d="M159 782q2-5 7-4.500q-3 2-2 5z" fill="#f8a020"/>
<circle cx="212" cy="785" r="5.8" fill="#f08018"/><path d="M210 781.5l5.5 3.5-5.5 3.500z" fill="#fff"/>
<path d="M327.5 785L333.6 782.8A6.5 6.5 0 0 1 332.5 789.2z" fill="#ff0000"/>
<path d="M327.5 785L332.5 789.2A6.5 6.5 0 0 1 326.4 791.4z" fill="#ffff00"/>
<path d="M327.5 785L326.4 791.4A6.5 6.5 0 0 1 321.4 787.2z" fill="#00ff00"/>
<path d="M327.5 785L321.4 787.2A6.5 6.5 0 0 1 322.5 780.8z" fill="#00ffff"/>
<path d="M327.5 785L322.5 780.8A6.5 6.5 0 0 1 328.6 778.6z" fill="#0000ff"/>
<path d="M327.5 785L328.6 778.6A6.5 6.5 0 0 1 333.6 782.8z" fill="#ff00ff"/>
<circle cx="327.5" cy="785" r="1.8" fill="#fff"/><circle cx="327.5" cy="785" r="7.4" fill="none" stroke="#303030" stroke-width="1.4" stroke-dasharray="3 2"/>
<circle cx="349.5" cy="785" r="7.6" fill="#f0f0f0"/><circle cx="349.5" cy="785" r="6" fill="#d82020"/><path d="M346.5 788q0-4 3-7q0 3 2 4q1 2-.5 3.500z" fill="#f8d0d0"/>
<path d="M365 782l6 3 1-6 2 0 0 5 6-3-5 7-3 0 1 5-2 0-1-5-2-1z" fill="#0000ff" stroke="none" stroke-width="1" />
<text x="388.5" y="786" font-size="10" fill="#ff0000" textLength="15" lengthAdjust="spacingAndGlyphs" font-weight="bold" font-family='"Liberation Serif", serif'>MS</text>
<g shape-rendering="crispEdges"><rect x="442" y="778" width="9" height="8" fill="#0000ff"/><rect x="443" y="779" width="3" height="1" fill="#fff"/><rect x="445" y="780" width="1" height="2" fill="#fff"/><rect x="443" y="782" width="3" height="1" fill="#fff"/><rect x="447" y="779" width="1" height="3" fill="#fff"/><rect x="447" y="781" width="3" height="1" fill="#fff"/><rect x="449" y="779" width="1" height="5" fill="#fff"/><rect x="443" y="784" width="7" height="1" fill="#fff"/><rect x="452" y="782" width="1" height="8" fill="#000"/><rect x="448" y="788" width="7" height="1" fill="#000"/><rect x="450" y="784" width="1" height="2" fill="#000"/><rect x="449" y="786" width="1" height="2" fill="#000"/><rect x="451" y="782" width="1" height="2" fill="#000"/><rect x="452" y="791" width="1" height="1" fill="#000"/><rect x="453" y="779" width="2" height="2" fill="#00ffff"/><rect x="443" y="790" width="2" height="2" fill="#ff00ff"/><rect x="448" y="792" width="1" height="1" fill="#00ff00"/><rect x="453" y="790" width="1" height="1" fill="#ff0000"/></g>
<g shape-rendering="crispEdges"><rect x="601" y="777" width="16" height="16" fill="#000"/><rect x="1153" y="775" width="16" height="16" fill="#000"/></g>
<ellipse cx="609" cy="785" rx="5.5" ry="4" fill="#9fc0e8"/><path d="M602 789l5-5 2.5 2 6-7.5" fill="none" stroke="#1020ff" stroke-width="1.2"/>
<ellipse cx="1161" cy="783" rx="5.5" ry="4" fill="#9fc0e8"/><path d="M1154 787l5-5 2.5 2 6-7.5" fill="none" stroke="#1020ff" stroke-width="1.2"/>
<g shape-rendering="crispEdges"><rect x="764" y="777" width="11" height="3" fill="#f0a020"/><rect x="763" y="780" width="14" height="9" fill="#e8f0ff"/><rect x="772" y="781" width="3" height="2" fill="#e05020"/><rect x="766" y="786" width="8" height="6" fill="#2898c8"/><rect x="768" y="787" width="4" height="3" fill="#50c070"/><rect x="763" y="788" width="3" height="2" fill="#a0c8f0"/><rect x="774" y="788" width="3" height="2" fill="#a0c8f0"/></g>
<g shape-rendering="crispEdges"><rect x="1112" y="781" width="16" height="9" fill="#d0d0d0"/><rect x="1113" y="782" width="14" height="7" fill="#f0f0f0"/>
<rect x="1114" y="783" width="1" height="1" fill="#606060"/><rect x="1114" y="785" width="1" height="1" fill="#606060"/>
<rect x="1116" y="783" width="1" height="1" fill="#606060"/><rect x="1116" y="785" width="1" height="1" fill="#606060"/>
<rect x="1118" y="783" width="1" height="1" fill="#606060"/><rect x="1118" y="785" width="1" height="1" fill="#606060"/>
<rect x="1120" y="783" width="1" height="1" fill="#606060"/><rect x="1120" y="785" width="1" height="1" fill="#606060"/>
<rect x="1122" y="783" width="1" height="1" fill="#606060"/><rect x="1122" y="785" width="1" height="1" fill="#606060"/>
<rect x="1124" y="783" width="1" height="1" fill="#606060"/><rect x="1124" y="785" width="1" height="1" fill="#606060"/>
<rect x="1115" y="787" width="10" height="1" fill="#606060"/></g>
<path d="M1116 780q3-4 6-2t5-3" fill="none" stroke="#b0b0b0" stroke-width="1" />
<path d="M1145.5 779l-5 4.5 5 4.5" fill="none" stroke="#fff" stroke-width="2.2" />
<g shape-rendering="crispEdges"><rect x="1187" y="776" width="9" height="14" fill="#e8e8e8"/><rect x="1189" y="778" width="6" height="11" fill="#8fe098"/><rect x="1189" y="775" width="5" height="1" fill="#e8e8e8"/><rect x="1182" y="779" width="5" height="5" fill="#fff"/><rect x="1183" y="776" width="1" height="3" fill="#e8c040"/><rect x="1185" y="776" width="1" height="3" fill="#e8c040"/><rect x="1184" y="784" width="2" height="6" fill="#fff"/></g>
<g shape-rendering="crispEdges"><rect x="1203" y="775" width="11" height="9" fill="#e0e8f0"/><rect x="1204" y="776" width="9" height="7" fill="#1858c0"/><rect x="1199" y="779" width="10" height="8" fill="#e0e8f0"/><rect x="1200" y="780" width="8" height="6" fill="#2068d0"/><rect x="1202" y="788" width="5" height="2" fill="#d0d8e0"/></g>
<circle cx="1210.5" cy="787.5" r="4" fill="#2878e0"/><path d="M1208 786q2-2 4 0t1 3q-3 2-4 0z" fill="#40c040"/>
<path d="M1218 780h2.500l4-3.500v13l-4-3.500h-2.500z" fill="#f0f0f0" stroke="none" stroke-width="1" />
<path d="M1227 781q1.5 2 0 4M1229.5 779q3 4 0 8" fill="none" stroke="#50c860" stroke-width="1.2" />
</svg>
</body>
</html>
